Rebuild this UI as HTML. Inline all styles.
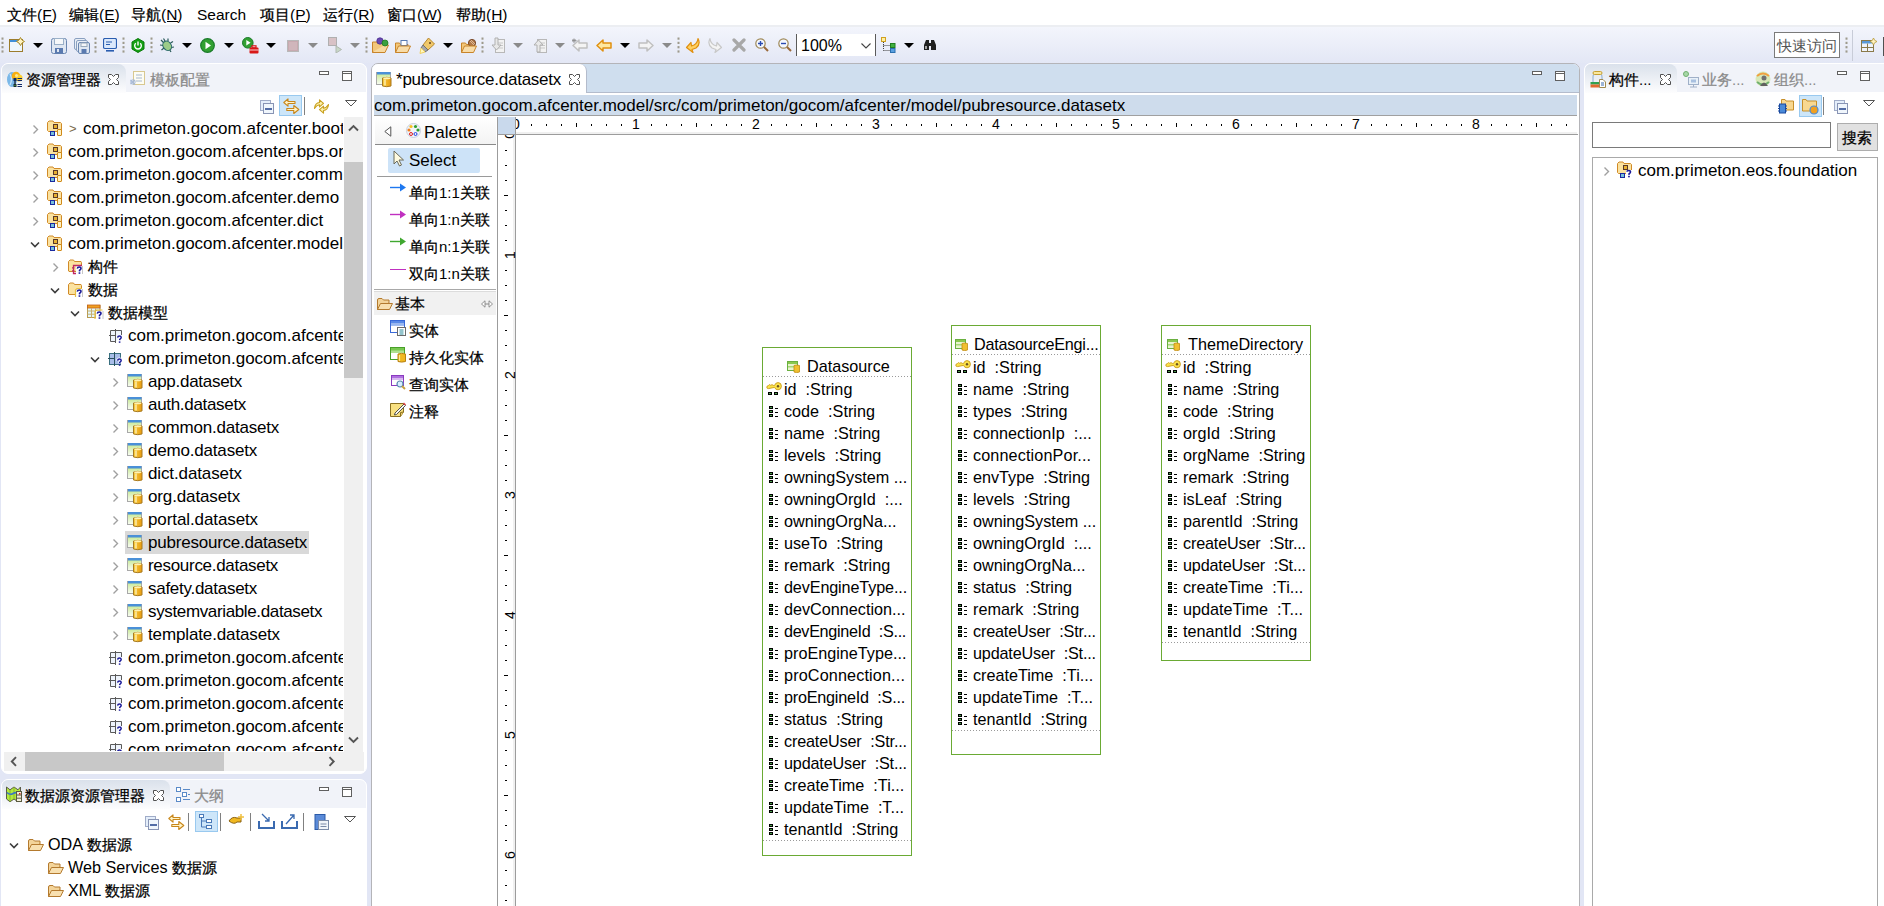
<!DOCTYPE html><html><head><meta charset="utf-8"><style>
html,body{margin:0;padding:0}
body{width:1884px;height:906px;overflow:hidden;position:relative;background:#e2e6f5;font-family:"Liberation Sans",sans-serif}
.t{position:absolute;white-space:nowrap}
.c{font-size:15px;line-height:0;-webkit-text-stroke:0.25px currentColor}
.ns .c{-webkit-text-stroke:0}
div,svg{position:absolute}
</style></head><body>
<div style="position:absolute;left:0px;top:0px;width:1884px;height:25px;background:#fff"></div>
<div style="position:absolute;left:0px;top:25px;width:1884px;height:2px;background:#eceef2"></div>
<div class="t " style="left:7px;top:5.00px;font-size:15.5px;line-height:19px;color:#000;"><span class="c">文件</span>(F)</div>
<div style="position:absolute;left:43px;top:21px;width:9px;height:1px;background:#000"></div>
<div class="t " style="left:69px;top:5.00px;font-size:15.5px;line-height:19px;color:#000;"><span class="c">编辑</span>(E)</div>
<div style="position:absolute;left:105px;top:21px;width:10px;height:1px;background:#000"></div>
<div class="t " style="left:131px;top:5.00px;font-size:15.5px;line-height:19px;color:#000;"><span class="c">导航</span>(N)</div>
<div style="position:absolute;left:167px;top:21px;width:11px;height:1px;background:#000"></div>
<div class="t " style="left:197px;top:5.00px;font-size:15.5px;line-height:19px;color:#000;">Search</div>
<div class="t " style="left:260px;top:5.00px;font-size:15.5px;line-height:19px;color:#000;"><span class="c">项目</span>(P)</div>
<div style="position:absolute;left:296px;top:21px;width:10px;height:1px;background:#000"></div>
<div class="t " style="left:323px;top:5.00px;font-size:15.5px;line-height:19px;color:#000;"><span class="c">运行</span>(R)</div>
<div style="position:absolute;left:359px;top:21px;width:11px;height:1px;background:#000"></div>
<div class="t " style="left:387px;top:5.00px;font-size:15.5px;line-height:19px;color:#000;"><span class="c">窗口</span>(W)</div>
<div style="position:absolute;left:423px;top:21px;width:15px;height:1px;background:#000"></div>
<div class="t " style="left:456px;top:5.00px;font-size:15.5px;line-height:19px;color:#000;"><span class="c">帮助</span>(H)</div>
<div style="position:absolute;left:492px;top:21px;width:11px;height:1px;background:#000"></div>
<div style="position:absolute;left:0px;top:27px;width:1884px;height:36px;background:linear-gradient(#f3f5fc,#e3e7f5)"></div>
<svg style="position:absolute;left:1px;top:37px;" width="3" height="17" viewBox="0 0 3 17"><rect x="0.5" y="0.5" width="2" height="2.2" fill="#9d9a8c"/><rect x="0.5" y="4.8" width="2" height="2.2" fill="#9d9a8c"/><rect x="0.5" y="9.1" width="2" height="2.2" fill="#9d9a8c"/><rect x="0.5" y="13.4" width="2" height="2.2" fill="#9d9a8c"/></svg>
<svg style="position:absolute;left:9px;top:37px;" width="16" height="16" viewBox="0 0 16 16"><rect x="0.5" y="2.5" width="13" height="12" fill="#eef6fc" stroke="#9c7c2c"/><rect x="1" y="3" width="12" height="2" fill="#3f8fd8"/><path d="M11.5 0.5 L13 3 L15.5 4.5 L13 6 L11.5 8.5 L10 6 L7.5 4.5 L10 3 Z" fill="#fff2c0" stroke="#a88a2a"/></svg>
<svg style="position:absolute;left:33px;top:43px;" width="10" height="5" viewBox="0 0 10 5"><path d="M0 0 L10 0 L5.0 5 Z" fill="#000"/></svg>
<svg style="position:absolute;left:51px;top:38px;" width="16" height="16" viewBox="0 0 16 16"><rect x="0.5" y="0.5" width="15" height="15" rx="2" fill="#dfe7f2" stroke="#6a86b0"/><rect x="3.5" y="0.5" width="9" height="6" fill="#f6f8fa" stroke="#9ab0c8"/><rect x="4" y="10" width="8" height="5.5" fill="#5a7ab0"/><rect x="6" y="11" width="2" height="3" fill="#dfe7f2"/></svg>
<svg style="position:absolute;left:74px;top:38px;" width="16" height="16" viewBox="0 0 16 16"><rect x="0.5" y="0.5" width="11" height="11" rx="1.5" fill="#e8eef6" stroke="#8aa0c0"/><rect x="2.5" y="2.5" width="11" height="11" rx="1.5" fill="#e8eef6" stroke="#8aa0c0"/><rect x="4.5" y="4.5" width="11" height="11" rx="1.5" fill="#dfe7f2" stroke="#6a86b0"/><rect x="7" y="5" width="6" height="3.5" fill="#f4f6f8" stroke="#9ab"/><rect x="7.5" y="11" width="5" height="4" fill="#5a7ab0"/></svg>
<svg style="position:absolute;left:94px;top:37px;" width="3" height="17" viewBox="0 0 3 17"><rect x="0.5" y="0.5" width="2" height="2.2" fill="#9d9a8c"/><rect x="0.5" y="4.8" width="2" height="2.2" fill="#9d9a8c"/><rect x="0.5" y="9.1" width="2" height="2.2" fill="#9d9a8c"/><rect x="0.5" y="13.4" width="2" height="2.2" fill="#9d9a8c"/></svg>
<svg style="position:absolute;left:103px;top:38px;" width="14" height="14" viewBox="0 0 14 14"><rect x="0.5" y="0.5" width="13" height="10" rx="1.5" fill="#dbe8fb" stroke="#2a5db0" stroke-width="1.2"/><path d="M3 4 L9 4 M3 6.5 L7 6.5" stroke="#2a5db0" stroke-width="1.2"/><rect x="3" y="12" width="8" height="1.6" fill="#2a5db0"/></svg>
<svg style="position:absolute;left:122px;top:37px;" width="3" height="17" viewBox="0 0 3 17"><rect x="0.5" y="0.5" width="2" height="2.2" fill="#9d9a8c"/><rect x="0.5" y="4.8" width="2" height="2.2" fill="#9d9a8c"/><rect x="0.5" y="9.1" width="2" height="2.2" fill="#9d9a8c"/><rect x="0.5" y="13.4" width="2" height="2.2" fill="#9d9a8c"/></svg>
<svg style="position:absolute;left:131px;top:38px;" width="14" height="15" viewBox="0 0 14 15"><path d="M7 0.5 L13 4 L13 11 L7 14.5 L1 11 L1 4 Z" fill="#14a014" stroke="#0a7a0a"/><path d="M4.8 5.3 A3.3 3.3 0 1 0 9.2 5.3" fill="none" stroke="#fff" stroke-width="1.4"/><path d="M7 3.5 L7 7.5" stroke="#fff" stroke-width="1.4"/></svg>
<svg style="position:absolute;left:150px;top:37px;" width="3" height="17" viewBox="0 0 3 17"><rect x="0.5" y="0.5" width="2" height="2.2" fill="#9d9a8c"/><rect x="0.5" y="4.8" width="2" height="2.2" fill="#9d9a8c"/><rect x="0.5" y="9.1" width="2" height="2.2" fill="#9d9a8c"/><rect x="0.5" y="13.4" width="2" height="2.2" fill="#9d9a8c"/></svg>
<svg style="position:absolute;left:159px;top:37px;" width="16" height="16" viewBox="0 0 16 16"><path d="M2 3 L5 6 M1 8 L4.5 8.5 M2.5 13 L5 11 M9 1.5 L9 4 M14 4.5 L11.5 6 M15 10 L12 10.5 M12 15 L10.5 12.5 M4.5 1.5 L6 4" stroke="#2a5a5a" stroke-width="1.2"/><ellipse cx="8.2" cy="8.8" rx="4" ry="5" transform="rotate(-35 8.2 8.8)" fill="#9ccc88" stroke="#2a6a6a" stroke-width="1.1"/></svg>
<svg style="position:absolute;left:182px;top:43px;" width="10" height="5" viewBox="0 0 10 5"><path d="M0 0 L10 0 L5.0 5 Z" fill="#000"/></svg>
<svg style="position:absolute;left:200px;top:38px;" width="15" height="15" viewBox="0 0 15 15"><circle cx="7.5" cy="7.5" r="6.8" fill="#32a032" stroke="#187a28" stroke-width="1.2"/><path d="M5.5 3.8 L11 7.5 L5.5 11.2 Z" fill="#fff"/></svg>
<svg style="position:absolute;left:224px;top:43px;" width="10" height="5" viewBox="0 0 10 5"><path d="M0 0 L10 0 L5.0 5 Z" fill="#000"/></svg>
<svg style="position:absolute;left:242px;top:37px;" width="17" height="17" viewBox="0 0 17 17"><circle cx="5.8" cy="5.8" r="5.3" fill="#32a032" stroke="#187a28"/><path d="M4.3 3 L8.6 5.8 L4.3 8.6 Z" fill="#fff"/><rect x="7.5" y="10.5" width="9" height="6" rx="1" fill="#d81818"/><rect x="10" y="8.8" width="4" height="2" fill="none" stroke="#d81818" stroke-width="1.2"/><path d="M7.5 13 L16.5 13" stroke="#fff" stroke-width="0.8"/></svg>
<svg style="position:absolute;left:266px;top:43px;" width="10" height="5" viewBox="0 0 10 5"><path d="M0 0 L10 0 L5.0 5 Z" fill="#000"/></svg>
<svg style="position:absolute;left:287px;top:40px;" width="12" height="12" viewBox="0 0 12 12"><rect x="0.5" y="0.5" width="11" height="11" fill="#c8aab0" stroke="#b8b8b8"/><rect x="2" y="2" width="8" height="8" fill="#d0b6bb"/></svg>
<svg style="position:absolute;left:308px;top:43px;" width="10" height="5" viewBox="0 0 10 5"><path d="M0 0 L10 0 L5.0 5 Z" fill="#8a8a8a"/></svg>
<svg style="position:absolute;left:328px;top:37px;" width="15" height="16" viewBox="0 0 15 16"><rect x="0.5" y="0.5" width="8" height="8" fill="#d8c2c6" stroke="#b0b0b0"/><path d="M8 9 L13.5 12.5 L8 16 Z" fill="#c8d8c8" stroke="#b0b8b0"/></svg>
<svg style="position:absolute;left:350px;top:43px;" width="10" height="5" viewBox="0 0 10 5"><path d="M0 0 L10 0 L5.0 5 Z" fill="#8a8a8a"/></svg>
<svg style="position:absolute;left:365px;top:37px;" width="3" height="17" viewBox="0 0 3 17"><rect x="0.5" y="0.5" width="2" height="2.2" fill="#9d9a8c"/><rect x="0.5" y="4.8" width="2" height="2.2" fill="#9d9a8c"/><rect x="0.5" y="9.1" width="2" height="2.2" fill="#9d9a8c"/><rect x="0.5" y="13.4" width="2" height="2.2" fill="#9d9a8c"/></svg>
<svg style="position:absolute;left:372px;top:37px;" width="17" height="16" viewBox="0 0 17 16"><path d="M0.5 5 L0.5 15.5 L13 15.5 L16.5 8 L4 8 L0.5 15.5" fill="#f8d9a0" stroke="#c8842a"/><path d="M0.5 15 L0.5 5 L5 5 L6 6.5 L13 6.5 L13 8" fill="#f3c77a" stroke="#c8842a"/><circle cx="8" cy="4" r="3.2" fill="#6a4ab0" stroke="#4a3090" stroke-width="0.8"/><circle cx="13" cy="6" r="3" fill="#3aa040" stroke="#207a20" stroke-width="0.8"/></svg>
<svg style="position:absolute;left:395px;top:38px;" width="16" height="15" viewBox="0 0 16 15"><path d="M0.5 14.5 L0.5 5 L4.5 5 L5.5 6.5 L13 6.5 L13 8" fill="#f3c77a" stroke="#c8842a"/><rect x="6" y="2.5" width="6" height="5" fill="#fff" stroke="#5a7ab0"/><path d="M0.5 14.5 L3.5 8 L15.5 8 L12.5 14.5 Z" fill="#f8dca8" stroke="#c8842a"/></svg>
<svg style="position:absolute;left:419px;top:37px;" width="17" height="17" viewBox="0 0 17 17"><path d="M9.5 1 L15.5 7 L9 13 L4 8 Z" fill="#f0c86a" stroke="#b8862a"/><path d="M4 8 L9 13 L6 15 L2 11 Z" fill="#a8a8a8" stroke="#707070"/><path d="M2 11 L6 15 L1 16.5 Z" fill="#fff8c0" stroke="#f0d060"/><circle cx="11" cy="6" r="1" fill="#604020"/></svg>
<svg style="position:absolute;left:443px;top:43px;" width="10" height="5" viewBox="0 0 10 5"><path d="M0 0 L10 0 L5.0 5 Z" fill="#000"/></svg>
<svg style="position:absolute;left:461px;top:38px;" width="16" height="15" viewBox="0 0 16 15"><path d="M0.5 14.5 L0.5 5 L4.5 5 L5.5 6.5 L13 6.5 L13 8" fill="#f3c77a" stroke="#c8842a"/><circle cx="11" cy="5" r="3.6" fill="#b27a4a" stroke="#7a4a2a"/><path d="M9 3 L13 7 M10 2 L14 6" stroke="#e8c8a8" stroke-width="0.8"/><path d="M0.5 14.5 L3.5 8 L15.5 8 L12.5 14.5 Z" fill="#f8dca8" stroke="#c8842a"/></svg>
<svg style="position:absolute;left:481px;top:37px;" width="3" height="17" viewBox="0 0 3 17"><rect x="0.5" y="0.5" width="2" height="2.2" fill="#9d9a8c"/><rect x="0.5" y="4.8" width="2" height="2.2" fill="#9d9a8c"/><rect x="0.5" y="9.1" width="2" height="2.2" fill="#9d9a8c"/><rect x="0.5" y="13.4" width="2" height="2.2" fill="#9d9a8c"/></svg>
<svg style="position:absolute;left:490px;top:37px;" width="15" height="16" viewBox="0 0 15 16"><rect x="5.5" y="2.5" width="9" height="13" fill="#f2f2f2" stroke="#b8b8b8"/><path d="M8 6 L13 6 M8 8.5 L13 8.5 M8 11 L13 11" stroke="#c8c8c8"/><path d="M5 1 L8 1 L8 8 L11 8 L6.5 13 L2 8 L5 8 Z" fill="#e8e8e8" stroke="#b0b0b0"/></svg>
<svg style="position:absolute;left:513px;top:43px;" width="10" height="5" viewBox="0 0 10 5"><path d="M0 0 L10 0 L5.0 5 Z" fill="#8a8a8a"/></svg>
<svg style="position:absolute;left:532px;top:37px;" width="15" height="16" viewBox="0 0 15 16"><rect x="5.5" y="2.5" width="9" height="13" fill="#f2f2f2" stroke="#b8b8b8"/><path d="M8 6 L13 6 M8 8.5 L13 8.5 M8 11 L13 11" stroke="#c8c8c8"/><path d="M5 15 L5 8 L2 8 L6.5 3 L11 8 L8 8 L8 15 Z" fill="#e8e8e8" stroke="#b0b0b0"/></svg>
<svg style="position:absolute;left:555px;top:43px;" width="10" height="5" viewBox="0 0 10 5"><path d="M0 0 L10 0 L5.0 5 Z" fill="#8a8a8a"/></svg>
<svg style="position:absolute;left:572px;top:38px;" width="16" height="15" viewBox="0 0 16 15"><path d="M1 7.5 L7 2 L7 5 L15 5 L15 10 L7 10 L7 13 Z" fill="#f4f4f4" stroke="#c0c0c0" stroke-width="1.5" stroke-linejoin="round"/><path d="M2 0.5 L2 5 M0 2.5 L4.5 2.5 M0.5 1 L3.5 4 M3.5 1 L0.5 4" stroke="#909090" stroke-width="0.9"/></svg>
<svg style="position:absolute;left:596px;top:38px;" width="16" height="15" viewBox="0 0 16 15"><path d="M1 7.5 L7 2 L7 5 L15 5 L15 10 L7 10 L7 13 Z" fill="#ffe8a0" stroke="#e09010" stroke-width="1.5" stroke-linejoin="round"/></svg>
<svg style="position:absolute;left:620px;top:43px;" width="10" height="5" viewBox="0 0 10 5"><path d="M0 0 L10 0 L5.0 5 Z" fill="#000"/></svg>
<svg style="position:absolute;left:638px;top:38px;" width="16" height="15" viewBox="0 0 16 15"><path d="M15 7.5 L9 2 L9 5 L1 5 L1 10 L9 10 L9 13 Z" fill="#f4f4f4" stroke="#c0c0c0" stroke-width="1.5" stroke-linejoin="round"/></svg>
<svg style="position:absolute;left:662px;top:43px;" width="10" height="5" viewBox="0 0 10 5"><path d="M0 0 L10 0 L5.0 5 Z" fill="#8a8a8a"/></svg>
<svg style="position:absolute;left:677px;top:37px;" width="3" height="17" viewBox="0 0 3 17"><rect x="0.5" y="0.5" width="2" height="2.2" fill="#9d9a8c"/><rect x="0.5" y="4.8" width="2" height="2.2" fill="#9d9a8c"/><rect x="0.5" y="9.1" width="2" height="2.2" fill="#9d9a8c"/><rect x="0.5" y="13.4" width="2" height="2.2" fill="#9d9a8c"/></svg>
<svg style="position:absolute;left:685px;top:37px;" width="16" height="16" viewBox="0 0 16 16"><g><path d="M13 1.5 Q16 7 11 11 L7 12.5 L8 15.5 L1.5 10.5 L6 5.5 L6.5 9 L9 8 Q12.5 6 13 1.5 Z" fill="#ffd060" stroke="#e09010" stroke-width="1.2" stroke-linejoin="round"/></g></svg>
<svg style="position:absolute;left:707px;top:37px;" width="16" height="16" viewBox="0 0 16 16"><g transform="translate(16,0) scale(-1,1)"><path d="M13 1.5 Q16 7 11 11 L7 12.5 L8 15.5 L1.5 10.5 L6 5.5 L6.5 9 L9 8 Q12.5 6 13 1.5 Z" fill="#f4f4f4" stroke="#c8c8c8" stroke-width="1.2" stroke-linejoin="round"/></g></svg>
<svg style="position:absolute;left:732px;top:38px;" width="14" height="14" viewBox="0 0 14 14"><path d="M2 2 L12 12 M12 2 L2 12" stroke="#a8a8a8" stroke-width="3.2" stroke-linecap="round"/></svg>
<svg style="position:absolute;left:755px;top:38px;" width="14" height="14" viewBox="0 0 14 14"><circle cx="5.5" cy="5.5" r="4.7" fill="#f4f8ff" stroke="#a08a5a" stroke-width="1.2"/><path d="M3 5.5 L8 5.5 M5.5 3 L5.5 8" stroke="#2a4ab0" stroke-width="1.4"/><path d="M9 9 L13 13" stroke="#9a6a3a" stroke-width="2"/></svg>
<svg style="position:absolute;left:778px;top:38px;" width="14" height="14" viewBox="0 0 14 14"><circle cx="5.5" cy="5.5" r="4.7" fill="#f4f8ff" stroke="#a08a5a" stroke-width="1.2"/><path d="M3 5.5 L8 5.5" stroke="#2a4ab0" stroke-width="1.4"/><path d="M9 9 L13 13" stroke="#9a6a3a" stroke-width="2"/></svg>
<div style="position:absolute;left:796px;top:34px;width:1px;height:22px;background:#5a5a5a"></div>
<div style="position:absolute;left:797px;top:34px;width:78px;height:22px;background:#fff"></div>
<div style="position:absolute;left:875px;top:34px;width:1px;height:22px;background:#5a5a5a"></div>
<div class="t " style="left:801px;top:36.00px;font-size:16px;line-height:19px;color:#000;">100%</div>
<svg style="position:absolute;left:861px;top:43px;" width="10" height="6" viewBox="0 0 10 6"><path d="M0.5 0.5 L5 5 L9.5 0.5" fill="none" stroke="#444" stroke-width="1.1"/></svg>
<svg style="position:absolute;left:881px;top:37px;" width="15" height="16" viewBox="0 0 15 16"><rect x="0.5" y="0.5" width="4" height="4" fill="#fff0a0" stroke="#d0a020"/><rect x="9.5" y="6.5" width="4.5" height="4" fill="#40b040" stroke="#208020"/><rect x="9.5" y="11.5" width="4.5" height="4" fill="#5aa0e0" stroke="#2a70b0"/><path d="M2.5 5 L2.5 13.5 M2.5 8.5 L9 8.5 M2.5 13.5 L9 13.5" stroke="#404040" stroke-dasharray="1 1"/></svg>
<svg style="position:absolute;left:904px;top:43px;" width="10" height="5" viewBox="0 0 10 5"><path d="M0 0 L10 0 L5.0 5 Z" fill="#000"/></svg>
<svg style="position:absolute;left:923px;top:38px;" width="14" height="13" viewBox="0 0 14 13"><path d="M1 12 L1 7 L3 2 L6 2 L6 12 Z M13 12 L13 7 L11 2 L8 2 L8 12 Z" fill="#202020"/><rect x="5.5" y="5" width="3" height="3" fill="#202020"/><rect x="2" y="8" width="2" height="3" fill="#fff" opacity="0.6"/></svg>
<div style="position:absolute;left:1774px;top:32px;width:66px;height:26px;background:#fff;border:1px solid #7a7a7a;box-sizing:border-box"></div>
<div class="t ns" style="left:1777px;top:37.00px;font-size:15px;line-height:18px;color:#555;"><span class="c">快速访问</span></div>
<svg style="position:absolute;left:1845px;top:37px;" width="3" height="17" viewBox="0 0 3 17"><rect x="0.5" y="0.5" width="2" height="2.2" fill="#9d9a8c"/><rect x="0.5" y="4.8" width="2" height="2.2" fill="#9d9a8c"/><rect x="0.5" y="9.1" width="2" height="2.2" fill="#9d9a8c"/><rect x="0.5" y="13.4" width="2" height="2.2" fill="#9d9a8c"/></svg>
<div style="position:absolute;left:1852px;top:30px;width:1px;height:31px;background:#c8ccd8"></div>
<svg style="position:absolute;left:1861px;top:38px;" width="16" height="15" viewBox="0 0 16 15"><rect x="0.5" y="2.5" width="12" height="11" fill="#f0f4fa" stroke="#8a7a4a"/><rect x="1" y="3" width="11" height="2.5" fill="#5a9ad8"/><path d="M6.5 5.5 L6.5 13.5 M0.5 9.5 L12.5 9.5" stroke="#8a7a4a"/><path d="M12.5 0 L13.7 2.3 L16 3.5 L13.7 4.7 L12.5 7 L11.3 4.7 L9 3.5 L11.3 2.3 Z" fill="#fff2c0" stroke="#b89a3a" stroke-width="0.8"/></svg>
<div style="position:absolute;left:1883px;top:37px;width:1px;height:19px;background:#505050"></div>
<div style="position:absolute;left:1px;top:63px;width:366px;height:711px;background:#fff;border:1px solid #fff;border-radius:7px 7px 7px 7px;box-sizing:border-box"></div>
<div style="position:absolute;left:2px;top:64px;width:364px;height:28px;background:#f1f3f9;border-radius:6px 6px 0 0"></div>
<div style="position:absolute;left:2px;top:64px;width:124px;height:29px;background:linear-gradient(#dae1eb,#fdfdfe);border-radius:6px 8px 0 0"></div>
<div class="t " style="left:26px;top:71.00px;font-size:15px;line-height:18px;color:#000;"><span class="c">资源管理器</span></div>
<svg style="position:absolute;left:108px;top:74px;" width="11" height="11" viewBox="0 0 11 11"><path d="M0.5 0.5 L3.5 0.5 L5.5 2.5 L7.5 0.5 L10.5 0.5 L10.5 3.5 L8.5 5.5 L10.5 7.5 L10.5 10.5 L7.5 10.5 L5.5 8.5 L3.5 10.5 L0.5 10.5 L0.5 7.5 L2.5 5.5 L0.5 3.5 Z" fill="#fff" stroke="#505050" stroke-width="1"/></svg>
<div class="t " style="left:150px;top:71.00px;font-size:15px;line-height:18px;color:#8a8a8a;"><span class="c">模板配置</span></div>
<svg style="position:absolute;left:319px;top:71px;" width="10" height="4" viewBox="0 0 10 4"><rect x="0.5" y="0.5" width="9" height="3" fill="#fff" stroke="#606060"/></svg>
<svg style="position:absolute;left:342px;top:71px;" width="10" height="10" viewBox="0 0 10 10"><rect x="0.5" y="0.5" width="9" height="9" fill="#fff" stroke="#606060"/><path d="M0.5 2.5 L9.5 2.5" stroke="#606060"/></svg>
<svg style="position:absolute;left:6px;top:71px;" width="17" height="17" viewBox="0 0 17 17"><ellipse cx="6" cy="8.5" rx="5" ry="7.5" fill="#7ab8e8"/><path d="M4 3 Q7 8 4 14" stroke="#c8e4f8" stroke-width="1.3" fill="none"/><circle cx="10" cy="5" r="4.3" fill="#f8b010"/><circle cx="13" cy="7" r="3.6" fill="#fcd030"/><circle cx="10.5" cy="4.5" r="1.5" fill="#fde89a"/><rect x="7.5" y="7" width="3" height="3" fill="#0a2a6a"/><rect x="7.5" y="13" width="3" height="3" fill="#1a2a2a"/><rect x="8.5" y="14" width="1" height="1" fill="#4ac04a"/><path d="M9 10 L9 13" stroke="#101828" stroke-width="1.2"/><path d="M11.5 7.5 L16 7.5 M11.5 9.5 L16 9.5 M11.5 13.5 L16 13.5 M11.5 15.5 L16 15.5" stroke="#102a6a" stroke-width="1.1"/></svg>
<svg style="position:absolute;left:130px;top:71px;" width="16" height="16" viewBox="0 0 16 16"><rect x="3.5" y="0.5" width="11" height="13" fill="#fdfdf4" stroke="#d8c890"/><path d="M6 4 L12 4 M6 7 L12 7 M6 10 L12 10" stroke="#a8b8d0"/><path d="M0.5 9 L5 13.5 M0.5 13 L5 9" stroke="#a8bad8" stroke-width="1.2"/><circle cx="3" cy="11" r="2.2" fill="none" stroke="#a8bad8"/></svg>
<svg style="position:absolute;left:260px;top:100px;" width="14" height="14" viewBox="0 0 14 14"><rect x="0.5" y="0.5" width="10" height="10" fill="#e4eefa" stroke="#a0acc8"/><rect x="3.5" y="3.5" width="10" height="10" fill="#f0f6fc" stroke="#8894b4"/><path d="M5 9 L12 9" stroke="#1f3f8a" stroke-width="1.5"/></svg>
<div style="position:absolute;left:279px;top:95px;width:23px;height:21px;background:#cde6f9;border:1px solid #99c9ef;box-sizing:border-box"></div>
<svg style="position:absolute;left:283px;top:98px;" width="17" height="17" viewBox="0 0 17 17"><path d="M0.8 4.5 L5 0.8 L5 3.5 L12 3.5 L12 5.5 L5 5.5 L5 8.2 Z" fill="#fff4c8" stroke="#c8861a" stroke-width="1.1" stroke-linejoin="round"/><path d="M15.8 11.5 L10.8 7.5 L10.8 10.5 L3.8 10.5 L3.8 12.5 L10.8 12.5 L10.8 15.5 Z" fill="#fff4c8" stroke="#c8861a" stroke-width="1.1" stroke-linejoin="round"/></svg>
<div style="position:absolute;left:304px;top:97px;width:1px;height:18px;background:#808080"></div>
<svg style="position:absolute;left:314px;top:99px;" width="15" height="15" viewBox="0 0 15 15"><path d="M0.5 9.5 Q1 4 5.5 3.5 L5.5 0.8 L9.5 4.3 L5.5 7.8 L5.5 5.8 Q2.5 6.2 0.5 9.5 Z" fill="#fdf0a8" stroke="#c8a020" stroke-width="1.1" stroke-linejoin="round"/><path d="M14.5 5.5 Q14 11 9.5 11.5 L9.5 14.2 L5.5 10.7 L9.5 7.2 L9.5 9.2 Q12.5 8.8 14.5 5.5 Z" fill="#fdf0a8" stroke="#c8a020" stroke-width="1.1" stroke-linejoin="round"/></svg>
<svg style="position:absolute;left:345px;top:100px;" width="12" height="7" viewBox="0 0 12 7"><path d="M0.5 0.5 L11.5 0.5 L6 6 Z" fill="#fff" stroke="#555" stroke-width="1"/></svg>
<div style="left:2px;top:117px;width:341px;height:634px;overflow:hidden">
<svg style="position:absolute;left:30px;top:7px;" width="7" height="11" viewBox="0 0 7 11"><path d="M1.5 1.5 L5.5 5.5 L1.5 9.5" fill="none" stroke="#a0a0a0" stroke-width="1.4"/></svg>
<svg style="position:absolute;left:45px;top:3px;" width="17" height="17" viewBox="0 0 17 17">
<path d="M0.5 2.5 L2 1 L6 1 L7 2.5 L13.5 2.5 L14.5 3.5 L14.5 11.5 L1.5 11.5 L0.5 10.5 Z" fill="#fbe2a0" stroke="#d08a28"/>
<rect x="6.5" y="4.5" width="4" height="4" fill="#e8b030" stroke="#5a3828"/>
<rect x="3.5" y="11.5" width="4" height="4" fill="#78c0d8" stroke="#1a2aa0"/>
<rect x="10.5" y="9.5" width="4" height="6" rx="0.5" fill="#fff0c0" stroke="#d08a18"/></svg>
<div class="t " style="left:67px;top:4.00px;font-size:13px;line-height:16px;color:#7a6a4a;">&gt;</div>
<div class="t " style="left:81px;top:2.00px;font-size:17px;line-height:20px;color:#000;">com.primeton.gocom.afcenter.boot</div>
<svg style="position:absolute;left:30px;top:30px;" width="7" height="11" viewBox="0 0 7 11"><path d="M1.5 1.5 L5.5 5.5 L1.5 9.5" fill="none" stroke="#a0a0a0" stroke-width="1.4"/></svg>
<svg style="position:absolute;left:45px;top:26px;" width="17" height="17" viewBox="0 0 17 17">
<path d="M0.5 2.5 L2 1 L6 1 L7 2.5 L13.5 2.5 L14.5 3.5 L14.5 11.5 L1.5 11.5 L0.5 10.5 Z" fill="#fbe2a0" stroke="#d08a28"/>
<rect x="6.5" y="4.5" width="4" height="4" fill="#e8b030" stroke="#5a3828"/>
<rect x="3.5" y="11.5" width="4" height="4" fill="#78c0d8" stroke="#1a2aa0"/>
<rect x="10.5" y="9.5" width="4" height="6" rx="0.5" fill="#fff0c0" stroke="#d08a18"/></svg>
<div class="t " style="left:66px;top:25.00px;font-size:17px;line-height:20px;color:#000;">com.primeton.gocom.afcenter.bps.org</div>
<svg style="position:absolute;left:30px;top:53px;" width="7" height="11" viewBox="0 0 7 11"><path d="M1.5 1.5 L5.5 5.5 L1.5 9.5" fill="none" stroke="#a0a0a0" stroke-width="1.4"/></svg>
<svg style="position:absolute;left:45px;top:49px;" width="17" height="17" viewBox="0 0 17 17">
<path d="M0.5 2.5 L2 1 L6 1 L7 2.5 L13.5 2.5 L14.5 3.5 L14.5 11.5 L1.5 11.5 L0.5 10.5 Z" fill="#fbe2a0" stroke="#d08a28"/>
<rect x="6.5" y="4.5" width="4" height="4" fill="#e8b030" stroke="#5a3828"/>
<rect x="3.5" y="11.5" width="4" height="4" fill="#78c0d8" stroke="#1a2aa0"/>
<rect x="10.5" y="9.5" width="4" height="6" rx="0.5" fill="#fff0c0" stroke="#d08a18"/></svg>
<div class="t " style="left:66px;top:48.00px;font-size:17px;line-height:20px;color:#000;">com.primeton.gocom.afcenter.common</div>
<svg style="position:absolute;left:30px;top:76px;" width="7" height="11" viewBox="0 0 7 11"><path d="M1.5 1.5 L5.5 5.5 L1.5 9.5" fill="none" stroke="#a0a0a0" stroke-width="1.4"/></svg>
<svg style="position:absolute;left:45px;top:72px;" width="17" height="17" viewBox="0 0 17 17">
<path d="M0.5 2.5 L2 1 L6 1 L7 2.5 L13.5 2.5 L14.5 3.5 L14.5 11.5 L1.5 11.5 L0.5 10.5 Z" fill="#fbe2a0" stroke="#d08a28"/>
<rect x="6.5" y="4.5" width="4" height="4" fill="#e8b030" stroke="#5a3828"/>
<rect x="3.5" y="11.5" width="4" height="4" fill="#78c0d8" stroke="#1a2aa0"/>
<rect x="10.5" y="9.5" width="4" height="6" rx="0.5" fill="#fff0c0" stroke="#d08a18"/></svg>
<div class="t " style="left:66px;top:71.00px;font-size:17px;line-height:20px;color:#000;">com.primeton.gocom.afcenter.demo</div>
<svg style="position:absolute;left:30px;top:99px;" width="7" height="11" viewBox="0 0 7 11"><path d="M1.5 1.5 L5.5 5.5 L1.5 9.5" fill="none" stroke="#a0a0a0" stroke-width="1.4"/></svg>
<svg style="position:absolute;left:45px;top:95px;" width="17" height="17" viewBox="0 0 17 17">
<path d="M0.5 2.5 L2 1 L6 1 L7 2.5 L13.5 2.5 L14.5 3.5 L14.5 11.5 L1.5 11.5 L0.5 10.5 Z" fill="#fbe2a0" stroke="#d08a28"/>
<rect x="6.5" y="4.5" width="4" height="4" fill="#e8b030" stroke="#5a3828"/>
<rect x="3.5" y="11.5" width="4" height="4" fill="#78c0d8" stroke="#1a2aa0"/>
<rect x="10.5" y="9.5" width="4" height="6" rx="0.5" fill="#fff0c0" stroke="#d08a18"/></svg>
<div class="t " style="left:66px;top:94.00px;font-size:17px;line-height:20px;color:#000;">com.primeton.gocom.afcenter.dict</div>
<svg style="position:absolute;left:28px;top:124px;" width="11" height="7" viewBox="0 0 11 7"><path d="M1 1.5 L5 5.5 L9 1.5" fill="none" stroke="#3c3c3c" stroke-width="1.6"/></svg>
<svg style="position:absolute;left:45px;top:118px;" width="17" height="17" viewBox="0 0 17 17">
<path d="M0.5 2.5 L2 1 L6 1 L7 2.5 L13.5 2.5 L14.5 3.5 L14.5 11.5 L1.5 11.5 L0.5 10.5 Z" fill="#fbe2a0" stroke="#d08a28"/>
<rect x="6.5" y="4.5" width="4" height="4" fill="#e8b030" stroke="#5a3828"/>
<rect x="3.5" y="11.5" width="4" height="4" fill="#78c0d8" stroke="#1a2aa0"/>
<rect x="10.5" y="9.5" width="4" height="6" rx="0.5" fill="#fff0c0" stroke="#d08a18"/></svg>
<div class="t " style="left:66px;top:117.00px;font-size:17px;line-height:20px;color:#000;">com.primeton.gocom.afcenter.model</div>
<svg style="position:absolute;left:50px;top:145px;" width="7" height="11" viewBox="0 0 7 11"><path d="M1.5 1.5 L5.5 5.5 L1.5 9.5" fill="none" stroke="#a0a0a0" stroke-width="1.4"/></svg>
<svg style="position:absolute;left:65px;top:141px;" width="17" height="17" viewBox="0 0 17 17"><path d="M1.5 3.5 L3 2 L6.5 2 L7.5 3.5 L14 3.5 L14.5 4.5 L14.5 13.5 L2 13.5 L1.5 13 Z" fill="#fbe2a0" stroke="#d08a28"/><rect x="9" y="8" width="6" height="8" fill="#fff"/><path d="M15.5 8 L15.5 16" stroke="#c8c8c8"/><path d="M15 7.5 L6.5 7.5 L6.5 15.5 L9 15.5 M5 9.8 L7.5 9.8 M5 12.8 L7.5 12.8" stroke="#c02860" stroke-width="1.3" fill="none"/><path d="M10.3 10.6 Q10.5 9 12.2 9 Q14 9 14 10.6 Q14 11.6 12.6 12.3 L12.4 13.3" fill="none" stroke="#1a1a9a" stroke-width="1.6"/><rect x="11.6" y="14.3" width="1.7" height="1.5" fill="#1a1a9a"/></svg>
<div class="t " style="left:86px;top:141.00px;font-size:15px;line-height:18px;color:#000;"><span class="c">构件</span></div>
<svg style="position:absolute;left:48px;top:170px;" width="11" height="7" viewBox="0 0 11 7"><path d="M1 1.5 L5 5.5 L9 1.5" fill="none" stroke="#3c3c3c" stroke-width="1.6"/></svg>
<svg style="position:absolute;left:65px;top:164px;" width="17" height="17" viewBox="0 0 17 17"><path d="M1.5 3.5 L3 2 L6.5 2 L7.5 3.5 L14 3.5 L14.5 4.5 L14.5 13.5 L2 13.5 L1.5 13 Z" fill="#fbe2a0" stroke="#d08a28"/><rect x="9" y="8" width="6" height="8" fill="#fff"/><path d="M15.5 8 L15.5 16" stroke="#c8c8c8"/><path d="M8.5 16 L8.5 9 L10 7.5 L15 7.5" fill="none" stroke="#e8c040" stroke-width="1.2"/><path d="M10.3 10.6 Q10.5 9 12.2 9 Q14 9 14 10.6 Q14 11.6 12.6 12.3 L12.4 13.3" fill="none" stroke="#1a1a9a" stroke-width="1.6"/><rect x="11.6" y="14.3" width="1.7" height="1.5" fill="#1a1a9a"/></svg>
<div class="t " style="left:86px;top:164.00px;font-size:15px;line-height:18px;color:#000;"><span class="c">数据</span></div>
<svg style="position:absolute;left:68px;top:193px;" width="11" height="7" viewBox="0 0 11 7"><path d="M1 1.5 L5 5.5 L9 1.5" fill="none" stroke="#3c3c3c" stroke-width="1.6"/></svg>
<svg style="position:absolute;left:85px;top:186px;" width="17" height="17" viewBox="0 0 17 17"><rect x="0.5" y="2.5" width="12.5" height="12" fill="#e4f8fc" stroke="#b89a50"/><rect x="0.5" y="2" width="12.5" height="3" fill="#f0a020" stroke="#c0601a" stroke-width="0.8"/><path d="M0.5 8 L13 8 M0.5 11.2 L13 11.2 M4.5 5 L4.5 14.5 M8.5 5 L8.5 14.5" stroke="#c8b070" stroke-width="1"/><path d="M8 16 L8 8.5 L9.5 7 L15.5 7" fill="none" stroke="#e8c040" stroke-width="1.2"/><rect x="9" y="8" width="6.5" height="8.5" fill="#fff"/><path d="M16 8 L16 16" stroke="#c8c8c8"/><path d="M10.3 10.6 Q10.5 9 12.2 9 Q14 9 14 10.6 Q14 11.6 12.6 12.3 L12.4 13.3" fill="none" stroke="#1a1a9a" stroke-width="1.6"/><rect x="11.6" y="14.3" width="1.7" height="1.5" fill="#1a1a9a"/></svg>
<div class="t " style="left:106px;top:187.00px;font-size:15px;line-height:18px;color:#000;"><span class="c">数据模型</span></div>
<svg style="position:absolute;left:105px;top:210px;" width="17" height="17" viewBox="0 0 17 17"><path d="M9 14.5 L3.5 14.5 L3.5 3.5 L14.5 3.5 L14.5 8" fill="#eef4fc" stroke="#5a5a5a"/><path d="M8.5 2 L8.5 16 M2 8.5 L9 8.5" stroke="#5a5a5a"/><path d="M10.6 10.6 Q10.8 9 12.4 9 Q14.2 9 14.2 10.6 Q14.2 11.6 12.8 12.3 L12.6 13.2" fill="none" stroke="#fff" stroke-width="3"/><path d="M10.6 10.6 Q10.8 9 12.4 9 Q14.2 9 14.2 10.6 Q14.2 11.6 12.8 12.3 L12.6 13.2" fill="none" stroke="#1a1a9a" stroke-width="1.5"/><rect x="11.8" y="14.4" width="1.6" height="1.4" fill="#1a1a9a"/></svg>
<div class="t " style="left:126px;top:209.00px;font-size:17px;line-height:20px;color:#000;">com.primeton.gocom.afcenter.model</div>
<svg style="position:absolute;left:88px;top:239px;" width="11" height="7" viewBox="0 0 11 7"><path d="M1 1.5 L5 5.5 L9 1.5" fill="none" stroke="#3c3c3c" stroke-width="1.6"/></svg>
<svg style="position:absolute;left:105px;top:233px;" width="17" height="17" viewBox="0 0 17 17"><rect x="2.5" y="3.5" width="11" height="11" fill="#a8bde8" stroke="#3a7080"/><path d="M7.5 2 L7.5 16 M1 8.5 L8 8.5" stroke="#2a5060"/><path d="M10.6 10.6 Q10.8 9 12.4 9 Q14.2 9 14.2 10.6 Q14.2 11.6 12.8 12.3 L12.6 13.2" fill="none" stroke="#fff" stroke-width="3"/><path d="M10.6 10.6 Q10.8 9 12.4 9 Q14.2 9 14.2 10.6 Q14.2 11.6 12.8 12.3 L12.6 13.2" fill="none" stroke="#1a1a9a" stroke-width="1.5"/><rect x="11.8" y="14.4" width="1.6" height="1.4" fill="#1a1a9a"/></svg>
<div class="t " style="left:126px;top:232.00px;font-size:17px;line-height:20px;color:#000;">com.primeton.gocom.afcenter.model</div>
<svg style="position:absolute;left:110px;top:260px;" width="7" height="11" viewBox="0 0 7 11"><path d="M1.5 1.5 L5.5 5.5 L1.5 9.5" fill="none" stroke="#a0a0a0" stroke-width="1.4"/></svg>
<svg style="position:absolute;left:125px;top:256px;" width="17" height="17" viewBox="0 0 17 17"><defs><linearGradient id="dsg" x1="0" y1="0" x2="0" y2="1"><stop offset="0" stop-color="#c4e88a"/><stop offset="0.7" stop-color="#eaf6d8"/><stop offset="1" stop-color="#f8fcf0"/></linearGradient><linearGradient id="cyl" x1="0" y1="0" x2="1" y2="0"><stop offset="0" stop-color="#f8d040"/><stop offset="1" stop-color="#e89a10"/></linearGradient></defs>
<rect x="0.5" y="1.5" width="14" height="12" fill="url(#dsg)" stroke="#a8a8a8"/>
<rect x="1" y="1" width="13.5" height="2.5" fill="#4a90d8"/>
<path d="M6.5 7 Q10.8 5.6 15 7 L15 15 Q10.8 16.4 6.5 15 Z" fill="url(#cyl)" stroke="#a87a20" stroke-width="1"/>
<ellipse cx="10.8" cy="7.3" rx="3.6" ry="1" fill="#fff2b0"/>
<path d="M9 8.5 L9 14.5" stroke="#fff6c8" stroke-width="1.2"/></svg>
<div class="t " style="left:146px;top:255.00px;font-size:17px;line-height:20px;color:#000;letter-spacing:-0.28px">app.datasetx</div>
<svg style="position:absolute;left:110px;top:283px;" width="7" height="11" viewBox="0 0 7 11"><path d="M1.5 1.5 L5.5 5.5 L1.5 9.5" fill="none" stroke="#a0a0a0" stroke-width="1.4"/></svg>
<svg style="position:absolute;left:125px;top:279px;" width="17" height="17" viewBox="0 0 17 17"><defs><linearGradient id="dsg" x1="0" y1="0" x2="0" y2="1"><stop offset="0" stop-color="#c4e88a"/><stop offset="0.7" stop-color="#eaf6d8"/><stop offset="1" stop-color="#f8fcf0"/></linearGradient><linearGradient id="cyl" x1="0" y1="0" x2="1" y2="0"><stop offset="0" stop-color="#f8d040"/><stop offset="1" stop-color="#e89a10"/></linearGradient></defs>
<rect x="0.5" y="1.5" width="14" height="12" fill="url(#dsg)" stroke="#a8a8a8"/>
<rect x="1" y="1" width="13.5" height="2.5" fill="#4a90d8"/>
<path d="M6.5 7 Q10.8 5.6 15 7 L15 15 Q10.8 16.4 6.5 15 Z" fill="url(#cyl)" stroke="#a87a20" stroke-width="1"/>
<ellipse cx="10.8" cy="7.3" rx="3.6" ry="1" fill="#fff2b0"/>
<path d="M9 8.5 L9 14.5" stroke="#fff6c8" stroke-width="1.2"/></svg>
<div class="t " style="left:146px;top:278.00px;font-size:17px;line-height:20px;color:#000;letter-spacing:-0.31px">auth.datasetx</div>
<svg style="position:absolute;left:110px;top:306px;" width="7" height="11" viewBox="0 0 7 11"><path d="M1.5 1.5 L5.5 5.5 L1.5 9.5" fill="none" stroke="#a0a0a0" stroke-width="1.4"/></svg>
<svg style="position:absolute;left:125px;top:302px;" width="17" height="17" viewBox="0 0 17 17"><defs><linearGradient id="dsg" x1="0" y1="0" x2="0" y2="1"><stop offset="0" stop-color="#c4e88a"/><stop offset="0.7" stop-color="#eaf6d8"/><stop offset="1" stop-color="#f8fcf0"/></linearGradient><linearGradient id="cyl" x1="0" y1="0" x2="1" y2="0"><stop offset="0" stop-color="#f8d040"/><stop offset="1" stop-color="#e89a10"/></linearGradient></defs>
<rect x="0.5" y="1.5" width="14" height="12" fill="url(#dsg)" stroke="#a8a8a8"/>
<rect x="1" y="1" width="13.5" height="2.5" fill="#4a90d8"/>
<path d="M6.5 7 Q10.8 5.6 15 7 L15 15 Q10.8 16.4 6.5 15 Z" fill="url(#cyl)" stroke="#a87a20" stroke-width="1"/>
<ellipse cx="10.8" cy="7.3" rx="3.6" ry="1" fill="#fff2b0"/>
<path d="M9 8.5 L9 14.5" stroke="#fff6c8" stroke-width="1.2"/></svg>
<div class="t " style="left:146px;top:301.00px;font-size:17px;line-height:20px;color:#000;letter-spacing:-0.21px">common.datasetx</div>
<svg style="position:absolute;left:110px;top:329px;" width="7" height="11" viewBox="0 0 7 11"><path d="M1.5 1.5 L5.5 5.5 L1.5 9.5" fill="none" stroke="#a0a0a0" stroke-width="1.4"/></svg>
<svg style="position:absolute;left:125px;top:325px;" width="17" height="17" viewBox="0 0 17 17"><defs><linearGradient id="dsg" x1="0" y1="0" x2="0" y2="1"><stop offset="0" stop-color="#c4e88a"/><stop offset="0.7" stop-color="#eaf6d8"/><stop offset="1" stop-color="#f8fcf0"/></linearGradient><linearGradient id="cyl" x1="0" y1="0" x2="1" y2="0"><stop offset="0" stop-color="#f8d040"/><stop offset="1" stop-color="#e89a10"/></linearGradient></defs>
<rect x="0.5" y="1.5" width="14" height="12" fill="url(#dsg)" stroke="#a8a8a8"/>
<rect x="1" y="1" width="13.5" height="2.5" fill="#4a90d8"/>
<path d="M6.5 7 Q10.8 5.6 15 7 L15 15 Q10.8 16.4 6.5 15 Z" fill="url(#cyl)" stroke="#a87a20" stroke-width="1"/>
<ellipse cx="10.8" cy="7.3" rx="3.6" ry="1" fill="#fff2b0"/>
<path d="M9 8.5 L9 14.5" stroke="#fff6c8" stroke-width="1.2"/></svg>
<div class="t " style="left:146px;top:324.00px;font-size:17px;line-height:20px;color:#000;letter-spacing:-0.19px">demo.datasetx</div>
<svg style="position:absolute;left:110px;top:352px;" width="7" height="11" viewBox="0 0 7 11"><path d="M1.5 1.5 L5.5 5.5 L1.5 9.5" fill="none" stroke="#a0a0a0" stroke-width="1.4"/></svg>
<svg style="position:absolute;left:125px;top:348px;" width="17" height="17" viewBox="0 0 17 17"><defs><linearGradient id="dsg" x1="0" y1="0" x2="0" y2="1"><stop offset="0" stop-color="#c4e88a"/><stop offset="0.7" stop-color="#eaf6d8"/><stop offset="1" stop-color="#f8fcf0"/></linearGradient><linearGradient id="cyl" x1="0" y1="0" x2="1" y2="0"><stop offset="0" stop-color="#f8d040"/><stop offset="1" stop-color="#e89a10"/></linearGradient></defs>
<rect x="0.5" y="1.5" width="14" height="12" fill="url(#dsg)" stroke="#a8a8a8"/>
<rect x="1" y="1" width="13.5" height="2.5" fill="#4a90d8"/>
<path d="M6.5 7 Q10.8 5.6 15 7 L15 15 Q10.8 16.4 6.5 15 Z" fill="url(#cyl)" stroke="#a87a20" stroke-width="1"/>
<ellipse cx="10.8" cy="7.3" rx="3.6" ry="1" fill="#fff2b0"/>
<path d="M9 8.5 L9 14.5" stroke="#fff6c8" stroke-width="1.2"/></svg>
<div class="t " style="left:146px;top:347.00px;font-size:17px;line-height:20px;color:#000;letter-spacing:-0.12px">dict.datasetx</div>
<svg style="position:absolute;left:110px;top:375px;" width="7" height="11" viewBox="0 0 7 11"><path d="M1.5 1.5 L5.5 5.5 L1.5 9.5" fill="none" stroke="#a0a0a0" stroke-width="1.4"/></svg>
<svg style="position:absolute;left:125px;top:371px;" width="17" height="17" viewBox="0 0 17 17"><defs><linearGradient id="dsg" x1="0" y1="0" x2="0" y2="1"><stop offset="0" stop-color="#c4e88a"/><stop offset="0.7" stop-color="#eaf6d8"/><stop offset="1" stop-color="#f8fcf0"/></linearGradient><linearGradient id="cyl" x1="0" y1="0" x2="1" y2="0"><stop offset="0" stop-color="#f8d040"/><stop offset="1" stop-color="#e89a10"/></linearGradient></defs>
<rect x="0.5" y="1.5" width="14" height="12" fill="url(#dsg)" stroke="#a8a8a8"/>
<rect x="1" y="1" width="13.5" height="2.5" fill="#4a90d8"/>
<path d="M6.5 7 Q10.8 5.6 15 7 L15 15 Q10.8 16.4 6.5 15 Z" fill="url(#cyl)" stroke="#a87a20" stroke-width="1"/>
<ellipse cx="10.8" cy="7.3" rx="3.6" ry="1" fill="#fff2b0"/>
<path d="M9 8.5 L9 14.5" stroke="#fff6c8" stroke-width="1.2"/></svg>
<div class="t " style="left:146px;top:370.00px;font-size:17px;line-height:20px;color:#000;letter-spacing:-0.13px">org.datasetx</div>
<svg style="position:absolute;left:110px;top:398px;" width="7" height="11" viewBox="0 0 7 11"><path d="M1.5 1.5 L5.5 5.5 L1.5 9.5" fill="none" stroke="#a0a0a0" stroke-width="1.4"/></svg>
<svg style="position:absolute;left:125px;top:394px;" width="17" height="17" viewBox="0 0 17 17"><defs><linearGradient id="dsg" x1="0" y1="0" x2="0" y2="1"><stop offset="0" stop-color="#c4e88a"/><stop offset="0.7" stop-color="#eaf6d8"/><stop offset="1" stop-color="#f8fcf0"/></linearGradient><linearGradient id="cyl" x1="0" y1="0" x2="1" y2="0"><stop offset="0" stop-color="#f8d040"/><stop offset="1" stop-color="#e89a10"/></linearGradient></defs>
<rect x="0.5" y="1.5" width="14" height="12" fill="url(#dsg)" stroke="#a8a8a8"/>
<rect x="1" y="1" width="13.5" height="2.5" fill="#4a90d8"/>
<path d="M6.5 7 Q10.8 5.6 15 7 L15 15 Q10.8 16.4 6.5 15 Z" fill="url(#cyl)" stroke="#a87a20" stroke-width="1"/>
<ellipse cx="10.8" cy="7.3" rx="3.6" ry="1" fill="#fff2b0"/>
<path d="M9 8.5 L9 14.5" stroke="#fff6c8" stroke-width="1.2"/></svg>
<div class="t " style="left:146px;top:393.00px;font-size:17px;line-height:20px;color:#000;letter-spacing:-0.1px">portal.datasetx</div>
<div style="position:absolute;left:123px;top:414px;width:184px;height:23px;background:#d9d9d9"></div>
<svg style="position:absolute;left:110px;top:421px;" width="7" height="11" viewBox="0 0 7 11"><path d="M1.5 1.5 L5.5 5.5 L1.5 9.5" fill="none" stroke="#a0a0a0" stroke-width="1.4"/></svg>
<svg style="position:absolute;left:125px;top:417px;" width="17" height="17" viewBox="0 0 17 17"><defs><linearGradient id="dsg" x1="0" y1="0" x2="0" y2="1"><stop offset="0" stop-color="#c4e88a"/><stop offset="0.7" stop-color="#eaf6d8"/><stop offset="1" stop-color="#f8fcf0"/></linearGradient><linearGradient id="cyl" x1="0" y1="0" x2="1" y2="0"><stop offset="0" stop-color="#f8d040"/><stop offset="1" stop-color="#e89a10"/></linearGradient></defs>
<rect x="0.5" y="1.5" width="14" height="12" fill="url(#dsg)" stroke="#a8a8a8"/>
<rect x="1" y="1" width="13.5" height="2.5" fill="#4a90d8"/>
<path d="M6.5 7 Q10.8 5.6 15 7 L15 15 Q10.8 16.4 6.5 15 Z" fill="url(#cyl)" stroke="#a87a20" stroke-width="1"/>
<ellipse cx="10.8" cy="7.3" rx="3.6" ry="1" fill="#fff2b0"/>
<path d="M9 8.5 L9 14.5" stroke="#fff6c8" stroke-width="1.2"/></svg>
<div class="t " style="left:146px;top:416.00px;font-size:17px;line-height:20px;color:#000;letter-spacing:-0.22px">pubresource.datasetx</div>
<svg style="position:absolute;left:110px;top:444px;" width="7" height="11" viewBox="0 0 7 11"><path d="M1.5 1.5 L5.5 5.5 L1.5 9.5" fill="none" stroke="#a0a0a0" stroke-width="1.4"/></svg>
<svg style="position:absolute;left:125px;top:440px;" width="17" height="17" viewBox="0 0 17 17"><defs><linearGradient id="dsg" x1="0" y1="0" x2="0" y2="1"><stop offset="0" stop-color="#c4e88a"/><stop offset="0.7" stop-color="#eaf6d8"/><stop offset="1" stop-color="#f8fcf0"/></linearGradient><linearGradient id="cyl" x1="0" y1="0" x2="1" y2="0"><stop offset="0" stop-color="#f8d040"/><stop offset="1" stop-color="#e89a10"/></linearGradient></defs>
<rect x="0.5" y="1.5" width="14" height="12" fill="url(#dsg)" stroke="#a8a8a8"/>
<rect x="1" y="1" width="13.5" height="2.5" fill="#4a90d8"/>
<path d="M6.5 7 Q10.8 5.6 15 7 L15 15 Q10.8 16.4 6.5 15 Z" fill="url(#cyl)" stroke="#a87a20" stroke-width="1"/>
<ellipse cx="10.8" cy="7.3" rx="3.6" ry="1" fill="#fff2b0"/>
<path d="M9 8.5 L9 14.5" stroke="#fff6c8" stroke-width="1.2"/></svg>
<div class="t " style="left:146px;top:439.00px;font-size:17px;line-height:20px;color:#000;letter-spacing:-0.3px">resource.datasetx</div>
<svg style="position:absolute;left:110px;top:467px;" width="7" height="11" viewBox="0 0 7 11"><path d="M1.5 1.5 L5.5 5.5 L1.5 9.5" fill="none" stroke="#a0a0a0" stroke-width="1.4"/></svg>
<svg style="position:absolute;left:125px;top:463px;" width="17" height="17" viewBox="0 0 17 17"><defs><linearGradient id="dsg" x1="0" y1="0" x2="0" y2="1"><stop offset="0" stop-color="#c4e88a"/><stop offset="0.7" stop-color="#eaf6d8"/><stop offset="1" stop-color="#f8fcf0"/></linearGradient><linearGradient id="cyl" x1="0" y1="0" x2="1" y2="0"><stop offset="0" stop-color="#f8d040"/><stop offset="1" stop-color="#e89a10"/></linearGradient></defs>
<rect x="0.5" y="1.5" width="14" height="12" fill="url(#dsg)" stroke="#a8a8a8"/>
<rect x="1" y="1" width="13.5" height="2.5" fill="#4a90d8"/>
<path d="M6.5 7 Q10.8 5.6 15 7 L15 15 Q10.8 16.4 6.5 15 Z" fill="url(#cyl)" stroke="#a87a20" stroke-width="1"/>
<ellipse cx="10.8" cy="7.3" rx="3.6" ry="1" fill="#fff2b0"/>
<path d="M9 8.5 L9 14.5" stroke="#fff6c8" stroke-width="1.2"/></svg>
<div class="t " style="left:146px;top:462.00px;font-size:17px;line-height:20px;color:#000;letter-spacing:-0.27px">safety.datasetx</div>
<svg style="position:absolute;left:110px;top:490px;" width="7" height="11" viewBox="0 0 7 11"><path d="M1.5 1.5 L5.5 5.5 L1.5 9.5" fill="none" stroke="#a0a0a0" stroke-width="1.4"/></svg>
<svg style="position:absolute;left:125px;top:486px;" width="17" height="17" viewBox="0 0 17 17"><defs><linearGradient id="dsg" x1="0" y1="0" x2="0" y2="1"><stop offset="0" stop-color="#c4e88a"/><stop offset="0.7" stop-color="#eaf6d8"/><stop offset="1" stop-color="#f8fcf0"/></linearGradient><linearGradient id="cyl" x1="0" y1="0" x2="1" y2="0"><stop offset="0" stop-color="#f8d040"/><stop offset="1" stop-color="#e89a10"/></linearGradient></defs>
<rect x="0.5" y="1.5" width="14" height="12" fill="url(#dsg)" stroke="#a8a8a8"/>
<rect x="1" y="1" width="13.5" height="2.5" fill="#4a90d8"/>
<path d="M6.5 7 Q10.8 5.6 15 7 L15 15 Q10.8 16.4 6.5 15 Z" fill="url(#cyl)" stroke="#a87a20" stroke-width="1"/>
<ellipse cx="10.8" cy="7.3" rx="3.6" ry="1" fill="#fff2b0"/>
<path d="M9 8.5 L9 14.5" stroke="#fff6c8" stroke-width="1.2"/></svg>
<div class="t " style="left:146px;top:485.00px;font-size:17px;line-height:20px;color:#000;letter-spacing:-0.36px">systemvariable.datasetx</div>
<svg style="position:absolute;left:110px;top:513px;" width="7" height="11" viewBox="0 0 7 11"><path d="M1.5 1.5 L5.5 5.5 L1.5 9.5" fill="none" stroke="#a0a0a0" stroke-width="1.4"/></svg>
<svg style="position:absolute;left:125px;top:509px;" width="17" height="17" viewBox="0 0 17 17"><defs><linearGradient id="dsg" x1="0" y1="0" x2="0" y2="1"><stop offset="0" stop-color="#c4e88a"/><stop offset="0.7" stop-color="#eaf6d8"/><stop offset="1" stop-color="#f8fcf0"/></linearGradient><linearGradient id="cyl" x1="0" y1="0" x2="1" y2="0"><stop offset="0" stop-color="#f8d040"/><stop offset="1" stop-color="#e89a10"/></linearGradient></defs>
<rect x="0.5" y="1.5" width="14" height="12" fill="url(#dsg)" stroke="#a8a8a8"/>
<rect x="1" y="1" width="13.5" height="2.5" fill="#4a90d8"/>
<path d="M6.5 7 Q10.8 5.6 15 7 L15 15 Q10.8 16.4 6.5 15 Z" fill="url(#cyl)" stroke="#a87a20" stroke-width="1"/>
<ellipse cx="10.8" cy="7.3" rx="3.6" ry="1" fill="#fff2b0"/>
<path d="M9 8.5 L9 14.5" stroke="#fff6c8" stroke-width="1.2"/></svg>
<div class="t " style="left:146px;top:508.00px;font-size:17px;line-height:20px;color:#000;letter-spacing:-0.13px">template.datasetx</div>
<svg style="position:absolute;left:105px;top:532px;" width="17" height="17" viewBox="0 0 17 17"><path d="M9 14.5 L3.5 14.5 L3.5 3.5 L14.5 3.5 L14.5 8" fill="#eef4fc" stroke="#5a5a5a"/><path d="M8.5 2 L8.5 16 M2 8.5 L9 8.5" stroke="#5a5a5a"/><path d="M10.6 10.6 Q10.8 9 12.4 9 Q14.2 9 14.2 10.6 Q14.2 11.6 12.8 12.3 L12.6 13.2" fill="none" stroke="#fff" stroke-width="3"/><path d="M10.6 10.6 Q10.8 9 12.4 9 Q14.2 9 14.2 10.6 Q14.2 11.6 12.8 12.3 L12.6 13.2" fill="none" stroke="#1a1a9a" stroke-width="1.5"/><rect x="11.8" y="14.4" width="1.6" height="1.4" fill="#1a1a9a"/></svg>
<div class="t " style="left:126px;top:531.00px;font-size:17px;line-height:20px;color:#000;">com.primeton.gocom.afcenter.model</div>
<svg style="position:absolute;left:105px;top:555px;" width="17" height="17" viewBox="0 0 17 17"><path d="M9 14.5 L3.5 14.5 L3.5 3.5 L14.5 3.5 L14.5 8" fill="#eef4fc" stroke="#5a5a5a"/><path d="M8.5 2 L8.5 16 M2 8.5 L9 8.5" stroke="#5a5a5a"/><path d="M10.6 10.6 Q10.8 9 12.4 9 Q14.2 9 14.2 10.6 Q14.2 11.6 12.8 12.3 L12.6 13.2" fill="none" stroke="#fff" stroke-width="3"/><path d="M10.6 10.6 Q10.8 9 12.4 9 Q14.2 9 14.2 10.6 Q14.2 11.6 12.8 12.3 L12.6 13.2" fill="none" stroke="#1a1a9a" stroke-width="1.5"/><rect x="11.8" y="14.4" width="1.6" height="1.4" fill="#1a1a9a"/></svg>
<div class="t " style="left:126px;top:554.00px;font-size:17px;line-height:20px;color:#000;">com.primeton.gocom.afcenter.model</div>
<svg style="position:absolute;left:105px;top:578px;" width="17" height="17" viewBox="0 0 17 17"><path d="M9 14.5 L3.5 14.5 L3.5 3.5 L14.5 3.5 L14.5 8" fill="#eef4fc" stroke="#5a5a5a"/><path d="M8.5 2 L8.5 16 M2 8.5 L9 8.5" stroke="#5a5a5a"/><path d="M10.6 10.6 Q10.8 9 12.4 9 Q14.2 9 14.2 10.6 Q14.2 11.6 12.8 12.3 L12.6 13.2" fill="none" stroke="#fff" stroke-width="3"/><path d="M10.6 10.6 Q10.8 9 12.4 9 Q14.2 9 14.2 10.6 Q14.2 11.6 12.8 12.3 L12.6 13.2" fill="none" stroke="#1a1a9a" stroke-width="1.5"/><rect x="11.8" y="14.4" width="1.6" height="1.4" fill="#1a1a9a"/></svg>
<div class="t " style="left:126px;top:577.00px;font-size:17px;line-height:20px;color:#000;">com.primeton.gocom.afcenter.model</div>
<svg style="position:absolute;left:105px;top:601px;" width="17" height="17" viewBox="0 0 17 17"><path d="M9 14.5 L3.5 14.5 L3.5 3.5 L14.5 3.5 L14.5 8" fill="#eef4fc" stroke="#5a5a5a"/><path d="M8.5 2 L8.5 16 M2 8.5 L9 8.5" stroke="#5a5a5a"/><path d="M10.6 10.6 Q10.8 9 12.4 9 Q14.2 9 14.2 10.6 Q14.2 11.6 12.8 12.3 L12.6 13.2" fill="none" stroke="#fff" stroke-width="3"/><path d="M10.6 10.6 Q10.8 9 12.4 9 Q14.2 9 14.2 10.6 Q14.2 11.6 12.8 12.3 L12.6 13.2" fill="none" stroke="#1a1a9a" stroke-width="1.5"/><rect x="11.8" y="14.4" width="1.6" height="1.4" fill="#1a1a9a"/></svg>
<div class="t " style="left:126px;top:600.00px;font-size:17px;line-height:20px;color:#000;">com.primeton.gocom.afcenter.model</div>
<svg style="position:absolute;left:105px;top:624px;" width="17" height="17" viewBox="0 0 17 17"><path d="M9 14.5 L3.5 14.5 L3.5 3.5 L14.5 3.5 L14.5 8" fill="#eef4fc" stroke="#5a5a5a"/><path d="M8.5 2 L8.5 16 M2 8.5 L9 8.5" stroke="#5a5a5a"/><path d="M10.6 10.6 Q10.8 9 12.4 9 Q14.2 9 14.2 10.6 Q14.2 11.6 12.8 12.3 L12.6 13.2" fill="none" stroke="#fff" stroke-width="3"/><path d="M10.6 10.6 Q10.8 9 12.4 9 Q14.2 9 14.2 10.6 Q14.2 11.6 12.8 12.3 L12.6 13.2" fill="none" stroke="#1a1a9a" stroke-width="1.5"/><rect x="11.8" y="14.4" width="1.6" height="1.4" fill="#1a1a9a"/></svg>
<div class="t " style="left:126px;top:623.00px;font-size:17px;line-height:20px;color:#000;">com.primeton.gocom.afcenter.model</div>
</div>
<div style="position:absolute;left:344px;top:117px;width:19px;height:635px;background:#f0f0f0"></div>
<div style="position:absolute;left:344px;top:162px;width:19px;height:216px;background:#c8c8c8"></div>
<svg style="position:absolute;left:348px;top:124px;" width="11" height="8" viewBox="0 0 11 8"><path d="M1 6.5 L5.5 2 L10 6.5" fill="none" stroke="#555" stroke-width="1.9"/></svg>
<svg style="position:absolute;left:348px;top:736px;" width="11" height="8" viewBox="0 0 11 8"><path d="M1 1.5 L5.5 6 L10 1.5" fill="none" stroke="#555" stroke-width="1.9"/></svg>
<div style="position:absolute;left:4px;top:752px;width:360px;height:19px;background:#f0f0f0"></div>
<div style="position:absolute;left:25px;top:752px;width:199px;height:19px;background:#c8c8c8"></div>
<svg style="position:absolute;left:10px;top:756px;" width="8" height="11" viewBox="0 0 8 11"><path d="M6 1.2 L1.8 5.5 L6 9.8" fill="none" stroke="#555" stroke-width="1.9"/></svg>
<svg style="position:absolute;left:328px;top:756px;" width="8" height="11" viewBox="0 0 8 11"><path d="M1.5 1.2 L5.7 5.5 L1.5 9.8" fill="none" stroke="#555" stroke-width="1.9"/></svg>
<div style="position:absolute;left:1px;top:779px;width:366px;height:140px;background:#fff;border:1px solid #fff;border-radius:7px;box-sizing:border-box"></div>
<div style="position:absolute;left:2px;top:780px;width:364px;height:28px;background:#f1f3f9;border-radius:6px 6px 0 0"></div>
<div style="position:absolute;left:2px;top:780px;width:168px;height:29px;background:linear-gradient(#dae1eb,#fdfdfe);border-radius:6px 8px 0 0"></div>
<div class="t " style="left:25px;top:787.00px;font-size:15px;line-height:18px;color:#000;"><span class="c">数据源资源管理器</span></div>
<svg style="position:absolute;left:153px;top:790px;" width="11" height="11" viewBox="0 0 11 11"><path d="M0.5 0.5 L3.5 0.5 L5.5 2.5 L7.5 0.5 L10.5 0.5 L10.5 3.5 L8.5 5.5 L10.5 7.5 L10.5 10.5 L7.5 10.5 L5.5 8.5 L3.5 10.5 L0.5 10.5 L0.5 7.5 L2.5 5.5 L0.5 3.5 Z" fill="#fff" stroke="#505050" stroke-width="1"/></svg>
<div class="t " style="left:194px;top:787.00px;font-size:15px;line-height:18px;color:#8a8a8a;"><span class="c">大纲</span></div>
<svg style="position:absolute;left:319px;top:787px;" width="10" height="4" viewBox="0 0 10 4"><rect x="0.5" y="0.5" width="9" height="3" fill="#fff" stroke="#606060"/></svg>
<svg style="position:absolute;left:342px;top:787px;" width="10" height="10" viewBox="0 0 10 10"><rect x="0.5" y="0.5" width="9" height="9" fill="#fff" stroke="#606060"/><path d="M0.5 2.5 L9.5 2.5" stroke="#606060"/></svg>
<svg style="position:absolute;left:6px;top:786px;" width="17" height="17" viewBox="0 0 17 17"><path d="M0.5 1 L4 3.8 L8 1 L12 3.8 L14.5 1 L14.5 13 L12 15.8 L8 13 L4 15.8 L0.5 13 Z" fill="#b4ec3c" stroke="#5a5a48"/><path d="M4 3.8 L4 15.8 M8 1 L8 13" stroke="#8ab030"/><path d="M1 6.5 Q4 9.5 7 7.5 Q9.5 6 12 7" stroke="#3a78c0" stroke-width="1.6" fill="none"/><rect x="10.5" y="5.5" width="5" height="10" fill="#f2eed8" stroke="#5a5a40"/><path d="M10.5 9 L15.5 9 M10.5 12.2 L15.5 12.2" stroke="#5a5a40"/><rect x="13" y="7" width="1.5" height="1.5" fill="#e02020"/></svg>
<svg style="position:absolute;left:176px;top:787px;" width="15" height="15" viewBox="0 0 15 15"><rect x="0.5" y="0.5" width="4" height="4" fill="#fff" stroke="#5a8ac8"/><rect x="0.5" y="10.5" width="4" height="4" fill="#fff" stroke="#5a8ac8"/><rect x="6.5" y="5.5" width="4" height="4" fill="#fff" stroke="#5a8ac8"/><path d="M7 2.5 L14 2.5 M12 7.5 L14 7.5 M7 12.5 L14 12.5" stroke="#5a8ac8"/></svg>
<svg style="position:absolute;left:145px;top:816px;" width="14" height="14" viewBox="0 0 14 14"><rect x="0.5" y="0.5" width="10" height="10" fill="#e4eefa" stroke="#a0acc8"/><rect x="3.5" y="3.5" width="10" height="10" fill="#f0f6fc" stroke="#8894b4"/><path d="M5 9 L12 9" stroke="#1f3f8a" stroke-width="1.5"/></svg>
<svg style="position:absolute;left:168px;top:814px;" width="17" height="17" viewBox="0 0 17 17"><path d="M0.8 4.5 L5 0.8 L5 3.5 L12 3.5 L12 5.5 L5 5.5 L5 8.2 Z" fill="#fff4c8" stroke="#c8861a" stroke-width="1.1" stroke-linejoin="round"/><path d="M15.8 11.5 L10.8 7.5 L10.8 10.5 L3.8 10.5 L3.8 12.5 L10.8 12.5 L10.8 15.5 Z" fill="#fff4c8" stroke="#c8861a" stroke-width="1.1" stroke-linejoin="round"/></svg>
<div style="position:absolute;left:188px;top:813px;width:1px;height:18px;background:#808080"></div>
<div style="position:absolute;left:195px;top:811px;width:23px;height:21px;background:#cde6f9;border:1px solid #99c9ef;box-sizing:border-box"></div>
<svg style="position:absolute;left:199px;top:814px;" width="14" height="15" viewBox="0 0 14 15"><rect x="0.5" y="0.5" width="4" height="3" fill="#fff" stroke="#4a7ab8"/><rect x="7.5" y="5.5" width="5" height="3" fill="#fff" stroke="#4a7ab8"/><rect x="7.5" y="11.5" width="5" height="3" fill="#fff" stroke="#4a7ab8"/><path d="M2.5 3.5 L2.5 13 L7.5 13 M2.5 7 L7.5 7" stroke="#4a7ab8" fill="none"/></svg>
<div style="position:absolute;left:220px;top:813px;width:1px;height:18px;background:#808080"></div>
<svg style="position:absolute;left:228px;top:813px;" width="17" height="15" viewBox="0 0 17 15"><path d="M1 8 Q4 3 9 5 L13 5 L13 9 L9 9 Q6 12 1 8 Z" fill="#f0b820" stroke="#8a6010"/><path d="M13 1 L13 7 M10 4 L16 4" stroke="#f0c040" stroke-width="1.5"/></svg>
<div style="position:absolute;left:250px;top:813px;width:1px;height:18px;background:#808080"></div>
<svg style="position:absolute;left:258px;top:813px;" width="17" height="16" viewBox="0 0 17 16"><path d="M1 8 L1 15 L16 15 L16 8" fill="none" stroke="#3a6ab0" stroke-width="2"/><path d="M4 1 L11 8 M11 4 L11 8 L7 8" stroke="#3a6ab0" stroke-width="1.3" fill="none"/></svg>
<svg style="position:absolute;left:281px;top:813px;" width="17" height="16" viewBox="0 0 17 16"><path d="M1 8 L1 15 L16 15 L16 8" fill="none" stroke="#3a6ab0" stroke-width="2"/><path d="M5 11 L13 2 M9 2 L13 2 L13 6" stroke="#3a6ab0" stroke-width="1.3" fill="none"/></svg>
<div style="position:absolute;left:303px;top:813px;width:1px;height:18px;background:#808080"></div>
<svg style="position:absolute;left:314px;top:814px;" width="15" height="16" viewBox="0 0 15 16"><rect x="1" y="0.5" width="10" height="15" fill="#5a8ad8" stroke="#2a5aa8"/><rect x="4.5" y="6.5" width="10" height="9" fill="#f0f4fa" stroke="#7a8aa8"/><path d="M6.5 10 L12.5 10 M6.5 12.5 L12.5 12.5" stroke="#7a8aa8"/></svg>
<svg style="position:absolute;left:344px;top:816px;" width="12" height="7" viewBox="0 0 12 7"><path d="M0.5 0.5 L11.5 0.5 L6 6 Z" fill="#fff" stroke="#555" stroke-width="1"/></svg>
<svg style="position:absolute;left:9px;top:842px;" width="11" height="7" viewBox="0 0 11 7"><path d="M1 1.5 L5 5.5 L9 1.5" fill="none" stroke="#3c3c3c" stroke-width="1.6"/></svg>
<svg style="position:absolute;left:28px;top:838px;" width="17" height="15" viewBox="0 0 17 15">
<path d="M0.5 3 Q0.5 1.5 2 1.5 L5 1.5 L6.5 3 L12 3 L12 6 L0.5 12.5 Z" fill="#f3d49a" stroke="#b47a2e" stroke-width="1"/>
<path d="M0.5 12.5 L3.5 6.5 L15.5 6.5 L12.5 12.5 Z" fill="#f8e0b0" stroke="#b47a2e" stroke-width="1"/></svg>
<div class="t " style="left:48px;top:835.00px;font-size:16.2px;line-height:19px;color:#000;">ODA <span class="c">数据源</span></div>
<svg style="position:absolute;left:48px;top:861px;" width="17" height="15" viewBox="0 0 17 15">
<path d="M0.5 3 Q0.5 1.5 2 1.5 L5 1.5 L6.5 3 L12 3 L12 6 L0.5 12.5 Z" fill="#f3d49a" stroke="#b47a2e" stroke-width="1"/>
<path d="M0.5 12.5 L3.5 6.5 L15.5 6.5 L12.5 12.5 Z" fill="#f8e0b0" stroke="#b47a2e" stroke-width="1"/></svg>
<div class="t " style="left:68px;top:858.00px;font-size:16.2px;line-height:19px;color:#000;">Web Services <span class="c">数据源</span></div>
<svg style="position:absolute;left:48px;top:884px;" width="17" height="15" viewBox="0 0 17 15">
<path d="M0.5 3 Q0.5 1.5 2 1.5 L5 1.5 L6.5 3 L12 3 L12 6 L0.5 12.5 Z" fill="#f3d49a" stroke="#b47a2e" stroke-width="1"/>
<path d="M0.5 12.5 L3.5 6.5 L15.5 6.5 L12.5 12.5 Z" fill="#f8e0b0" stroke="#b47a2e" stroke-width="1"/></svg>
<div class="t " style="left:68px;top:881.00px;font-size:16.2px;line-height:19px;color:#000;">XML <span class="c">数据源</span></div>
<div style="position:absolute;left:371px;top:63px;width:1209px;height:850px;background:#fff;border:1px solid #b4b4b8;border-radius:7px;box-sizing:border-box"></div>
<div style="position:absolute;left:372px;top:64px;width:1207px;height:28px;background:#cfdeee;border-radius:6px 6px 0 0"></div>
<div style="position:absolute;left:372px;top:92px;width:1207px;height:1px;background:#b4bccc"></div>
<div style="position:absolute;left:372px;top:64px;width:215px;height:29px;background:#fff;border-radius:6px 7px 0 0;border-right:1px solid #b4bccc;box-sizing:border-box"></div>
<div class="t " style="left:396px;top:70.00px;font-size:17px;line-height:20px;color:#000;letter-spacing:-0.24px">*pubresource.datasetx</div>
<svg style="position:absolute;left:569px;top:74px;" width="11" height="11" viewBox="0 0 11 11"><path d="M0.5 0.5 L3.5 0.5 L5.5 2.5 L7.5 0.5 L10.5 0.5 L10.5 3.5 L8.5 5.5 L10.5 7.5 L10.5 10.5 L7.5 10.5 L5.5 8.5 L3.5 10.5 L0.5 10.5 L0.5 7.5 L2.5 5.5 L0.5 3.5 Z" fill="#fff" stroke="#505050" stroke-width="1"/></svg>
<svg style="position:absolute;left:1532px;top:71px;" width="10" height="4" viewBox="0 0 10 4"><rect x="0.5" y="0.5" width="9" height="3" fill="#fff" stroke="#606060"/></svg>
<svg style="position:absolute;left:1555px;top:71px;" width="10" height="10" viewBox="0 0 10 10"><rect x="0.5" y="0.5" width="9" height="9" fill="#fff" stroke="#606060"/><path d="M0.5 2.5 L9.5 2.5" stroke="#606060"/></svg>
<div style="position:absolute;left:374px;top:95px;width:1203px;height:20px;background:#cedcec;border-bottom:1px solid #a0a0a0"></div>
<div class="t " style="left:374px;top:96.00px;font-size:17px;line-height:20px;color:#000;">com.primeton.gocom.afcenter.model/src/com/primeton/gocom/afcenter/model/pubresource.datasetx</div>
<div style="position:absolute;left:375px;top:117px;width:122px;height:789px;background:#fff;border-right:1px solid #a8a8a8"></div>
<div style="position:absolute;left:375px;top:117px;width:121px;height:27px;background:linear-gradient(#fff,#f3f3f3)"></div>
<div class="t " style="left:424px;top:123.00px;font-size:17px;line-height:20px;color:#000;">Palette</div>
<div style="position:absolute;left:388px;top:148px;width:92px;height:25px;background:#cde3f8;border-radius:2px"></div>
<div class="t " style="left:409px;top:151.00px;font-size:17px;line-height:20px;color:#000;">Select</div>
<div style="position:absolute;left:377px;top:176px;width:115px;height:1px;background:#9a9a9a"></div>
<div class="t " style="left:409px;top:184.00px;font-size:15px;line-height:18px;color:#000;"><span class="c">单向</span>1:1<span class="c">关联</span></div>
<div class="t " style="left:409px;top:211.00px;font-size:15px;line-height:18px;color:#000;"><span class="c">单向</span>1:n<span class="c">关联</span></div>
<div class="t " style="left:409px;top:238.00px;font-size:15px;line-height:18px;color:#000;"><span class="c">单向</span>n:1<span class="c">关联</span></div>
<div class="t " style="left:409px;top:265.00px;font-size:15px;line-height:18px;color:#000;"><span class="c">双向</span>1:n<span class="c">关联</span></div>
<div style="position:absolute;left:374px;top:289px;width:122px;height:1px;background:#a8a8a8"></div>
<div style="position:absolute;left:374px;top:291px;width:122px;height:1px;background:#dcdcdc"></div>
<div style="position:absolute;left:374px;top:292px;width:122px;height:23px;background:#f1f1f1"></div>
<div class="t " style="left:395px;top:295.00px;font-size:15px;line-height:18px;color:#000;"><span class="c">基本</span></div>
<div class="t " style="left:409px;top:322.00px;font-size:15px;line-height:18px;color:#000;"><span class="c">实体</span></div>
<div class="t " style="left:409px;top:349.00px;font-size:15px;line-height:18px;color:#000;"><span class="c">持久化实体</span></div>
<div class="t " style="left:409px;top:376.00px;font-size:15px;line-height:18px;color:#000;"><span class="c">查询实体</span></div>
<div class="t " style="left:409px;top:403.00px;font-size:15px;line-height:18px;color:#000;"><span class="c">注释</span></div>
<div style="position:absolute;left:498px;top:117px;width:1080px;height:18px;background:#fff;border-bottom:1px solid #9c9c9c;box-sizing:border-box"></div>
<div style="position:absolute;left:498px;top:117px;width:18px;height:17px;background:#c9d9ec"></div>
<div style="position:absolute;left:497px;top:134px;width:19px;height:772px;background:#fff;border-left:1px solid #9c9c9c;border-right:1px solid #9c9c9c;box-sizing:border-box"></div>
<div style="position:absolute;left:513px;top:135px;width:2px;height:771px;background:#f0f0f0"></div>
<div style="position:absolute;left:516px;top:132px;width:1061px;height:2px;background:#f0f0f0"></div>
<svg style="position:absolute;left:376px;top:71px;" width="17" height="17" viewBox="0 0 17 17"><defs><linearGradient id="dsg" x1="0" y1="0" x2="0" y2="1"><stop offset="0" stop-color="#c4e88a"/><stop offset="0.7" stop-color="#eaf6d8"/><stop offset="1" stop-color="#f8fcf0"/></linearGradient><linearGradient id="cyl" x1="0" y1="0" x2="1" y2="0"><stop offset="0" stop-color="#f8d040"/><stop offset="1" stop-color="#e89a10"/></linearGradient></defs>
<rect x="0.5" y="1.5" width="14" height="12" fill="url(#dsg)" stroke="#a8a8a8"/>
<rect x="1" y="1" width="13.5" height="2.5" fill="#4a90d8"/>
<path d="M6.5 7 Q10.8 5.6 15 7 L15 15 Q10.8 16.4 6.5 15 Z" fill="url(#cyl)" stroke="#a87a20" stroke-width="1"/>
<ellipse cx="10.8" cy="7.3" rx="3.6" ry="1" fill="#fff2b0"/>
<path d="M9 8.5 L9 14.5" stroke="#fff6c8" stroke-width="1.2"/></svg>
<svg style="position:absolute;left:384px;top:126px;" width="8" height="11" viewBox="0 0 8 11"><path d="M6.8 0.8 L6.8 10.2 L0.8 5.5 Z" fill="#fff" stroke="#555" stroke-width="1"/></svg>
<svg style="position:absolute;left:406px;top:123px;" width="15" height="15" viewBox="0 0 15 15"><circle cx="7.5" cy="7.5" r="7" fill="#f2f4f8" stroke="#c8d0e0"/><circle cx="5" cy="3.5" r="1.6" fill="#f8c020"/><circle cx="9.5" cy="3.5" r="1.6" fill="#30a030"/><circle cx="3" cy="7" r="1.6" fill="#f08020"/><circle cx="12" cy="7" r="1.6" fill="#30a030"/><circle cx="5" cy="11" r="1.5" fill="none" stroke="#e02020"/><circle cx="9.5" cy="11" r="1.5" fill="none" stroke="#2040e0"/></svg>
<div style="position:absolute;left:375px;top:144px;width:121px;height:1px;background:#8a8a8a"></div>
<svg style="position:absolute;left:393px;top:150px;" width="12" height="17" viewBox="0 0 12 17"><path d="M1 1 L1 14 L4 11 L6.5 16 L8.5 15 L6 10 L10.5 10 Z" fill="#fffbe0" stroke="#6a6a5a" stroke-width="1"/></svg>
<svg style="position:absolute;left:390px;top:183px;" width="16" height="10" viewBox="0 0 16 10"><path d="M0 4.5 L11 4.5" stroke="#1e78f0" stroke-width="1.4"/><path d="M10 0.5 L16 4.5 L10 8.5 Z" fill="#1e78f0"/></svg>
<svg style="position:absolute;left:390px;top:210px;" width="16" height="10" viewBox="0 0 16 10"><path d="M0 4.5 L11 4.5" stroke="#c030c0" stroke-width="1.4"/><path d="M10 0.5 L16 4.5 L10 8.5 Z" fill="#c030c0"/></svg>
<svg style="position:absolute;left:390px;top:237px;" width="16" height="10" viewBox="0 0 16 10"><path d="M0 4.5 L11 4.5" stroke="#40a830" stroke-width="1.4"/><path d="M10 0.5 L16 4.5 L10 8.5 Z" fill="#40a830"/></svg>
<div style="position:absolute;left:390px;top:269px;width:16px;height:1px;background:#c030c0"></div>
<svg style="position:absolute;left:377px;top:297px;" width="17" height="15" viewBox="0 0 17 15">
<path d="M0.5 3 Q0.5 1.5 2 1.5 L5 1.5 L6.5 3 L12 3 L12 6 L0.5 12.5 Z" fill="#f3d49a" stroke="#b47a2e" stroke-width="1"/>
<path d="M0.5 12.5 L3.5 6.5 L15.5 6.5 L12.5 12.5 Z" fill="#f8e0b0" stroke="#b47a2e" stroke-width="1"/></svg>
<svg style="position:absolute;left:481px;top:300px;" width="12" height="8" viewBox="0 0 12 8"><path d="M0.5 4 L4 0.8 L4 7.2 Z M11.5 4 L8 0.8 L8 7.2 Z" fill="#fff" stroke="#888" stroke-width="0.9"/><path d="M4 4 L8 4" stroke="#888"/></svg>
<svg style="position:absolute;left:390px;top:320px;" width="17" height="17" viewBox="0 0 17 17"><rect x="0.5" y="0.5" width="14" height="12" fill="#fff" stroke="#3a6ad8"/><rect x="1" y="1" width="13" height="4.5" fill="#5a8ae8"/><rect x="1" y="3" width="13" height="2.5" fill="#9ab8f0"/><rect x="7.5" y="7.5" width="8" height="8" fill="#fff" stroke="#6a6a6a"/><path d="M9.5 10 L13.5 10 M9.5 12 L13.5 12 M9.5 14 L13.5 14" stroke="#2a8a9a"/></svg>
<svg style="position:absolute;left:390px;top:347px;" width="17" height="17" viewBox="0 0 17 17"><rect x="0.5" y="0.5" width="14" height="12" fill="#fff" stroke="#48a028"/><rect x="1" y="1" width="13" height="5" fill="#78c850"/><rect x="1" y="3.5" width="13" height="2.5" fill="#b0e090"/><path d="M8 7 Q11.5 5.8 15.5 7 L15.5 14.5 Q11.5 15.7 8 14.5 Z" fill="#f0b820" stroke="#b88010"/><path d="M9.5 8 L9.5 14" stroke="#fce890" stroke-width="1.2"/></svg>
<svg style="position:absolute;left:390px;top:374px;" width="17" height="17" viewBox="0 0 17 17"><rect x="1.5" y="1.5" width="12" height="10" fill="#fff" stroke="#8a3ac0"/><rect x="2" y="2" width="11" height="4" fill="#b070e0"/><rect x="2" y="4" width="11" height="2" fill="#d8b8f0"/><circle cx="10" cy="10" r="3" fill="#d8f0ff" stroke="#5a8ab0" stroke-width="1.2"/><path d="M12 12 L15 15" stroke="#c8a040" stroke-width="2"/></svg>
<svg style="position:absolute;left:390px;top:401px;" width="17" height="17" viewBox="0 0 17 17"><path d="M0.5 2.5 L13.5 2.5 L13.5 11 L10.5 15.5 L0.5 15.5 Z" fill="#f8e080" stroke="#8a7020"/><path d="M10.5 15.5 L10.5 11.5 L13.5 11" fill="#e8c860" stroke="#8a7020"/><path d="M5 12 L14 3 L15.5 4.5 L6.5 13.5 L4.5 14 Z" fill="#f8f8f0" stroke="#404040" stroke-width="0.9"/><path d="M14 1.5 L16 3.5 L15 4.5 L13 2.5 Z" fill="#e04040"/></svg>
<svg style="position:absolute;left:0;top:0" width="1884" height="906"><rect x="531" y="124" width="1" height="2" fill="#000"/><rect x="546" y="124" width="1" height="2" fill="#000"/><rect x="561" y="124" width="1" height="2" fill="#000"/><rect x="576" y="123" width="1" height="4" fill="#000"/><rect x="591" y="124" width="1" height="2" fill="#000"/><rect x="606" y="124" width="1" height="2" fill="#000"/><rect x="621" y="124" width="1" height="2" fill="#000"/><rect x="651" y="124" width="1" height="2" fill="#000"/><rect x="666" y="124" width="1" height="2" fill="#000"/><rect x="681" y="124" width="1" height="2" fill="#000"/><rect x="696" y="123" width="1" height="4" fill="#000"/><rect x="711" y="124" width="1" height="2" fill="#000"/><rect x="726" y="124" width="1" height="2" fill="#000"/><rect x="741" y="124" width="1" height="2" fill="#000"/><rect x="771" y="124" width="1" height="2" fill="#000"/><rect x="786" y="124" width="1" height="2" fill="#000"/><rect x="801" y="124" width="1" height="2" fill="#000"/><rect x="816" y="123" width="1" height="4" fill="#000"/><rect x="831" y="124" width="1" height="2" fill="#000"/><rect x="846" y="124" width="1" height="2" fill="#000"/><rect x="861" y="124" width="1" height="2" fill="#000"/><rect x="891" y="124" width="1" height="2" fill="#000"/><rect x="906" y="124" width="1" height="2" fill="#000"/><rect x="921" y="124" width="1" height="2" fill="#000"/><rect x="936" y="123" width="1" height="4" fill="#000"/><rect x="951" y="124" width="1" height="2" fill="#000"/><rect x="966" y="124" width="1" height="2" fill="#000"/><rect x="981" y="124" width="1" height="2" fill="#000"/><rect x="1011" y="124" width="1" height="2" fill="#000"/><rect x="1026" y="124" width="1" height="2" fill="#000"/><rect x="1041" y="124" width="1" height="2" fill="#000"/><rect x="1056" y="123" width="1" height="4" fill="#000"/><rect x="1071" y="124" width="1" height="2" fill="#000"/><rect x="1086" y="124" width="1" height="2" fill="#000"/><rect x="1101" y="124" width="1" height="2" fill="#000"/><rect x="1131" y="124" width="1" height="2" fill="#000"/><rect x="1146" y="124" width="1" height="2" fill="#000"/><rect x="1161" y="124" width="1" height="2" fill="#000"/><rect x="1176" y="123" width="1" height="4" fill="#000"/><rect x="1191" y="124" width="1" height="2" fill="#000"/><rect x="1206" y="124" width="1" height="2" fill="#000"/><rect x="1221" y="124" width="1" height="2" fill="#000"/><rect x="1251" y="124" width="1" height="2" fill="#000"/><rect x="1266" y="124" width="1" height="2" fill="#000"/><rect x="1281" y="124" width="1" height="2" fill="#000"/><rect x="1296" y="123" width="1" height="4" fill="#000"/><rect x="1311" y="124" width="1" height="2" fill="#000"/><rect x="1326" y="124" width="1" height="2" fill="#000"/><rect x="1341" y="124" width="1" height="2" fill="#000"/><rect x="1371" y="124" width="1" height="2" fill="#000"/><rect x="1386" y="124" width="1" height="2" fill="#000"/><rect x="1401" y="124" width="1" height="2" fill="#000"/><rect x="1416" y="123" width="1" height="4" fill="#000"/><rect x="1431" y="124" width="1" height="2" fill="#000"/><rect x="1446" y="124" width="1" height="2" fill="#000"/><rect x="1461" y="124" width="1" height="2" fill="#000"/><rect x="1491" y="124" width="1" height="2" fill="#000"/><rect x="1506" y="124" width="1" height="2" fill="#000"/><rect x="1521" y="124" width="1" height="2" fill="#000"/><rect x="1536" y="123" width="1" height="4" fill="#000"/><rect x="1551" y="124" width="1" height="2" fill="#000"/><rect x="1566" y="124" width="1" height="2" fill="#000"/><rect x="505" y="150" width="2" height="1" fill="#000"/><rect x="505" y="165" width="2" height="1" fill="#000"/><rect x="505" y="180" width="2" height="1" fill="#000"/><rect x="504" y="195" width="4" height="1" fill="#000"/><rect x="505" y="210" width="2" height="1" fill="#000"/><rect x="505" y="225" width="2" height="1" fill="#000"/><rect x="505" y="240" width="2" height="1" fill="#000"/><rect x="505" y="270" width="2" height="1" fill="#000"/><rect x="505" y="285" width="2" height="1" fill="#000"/><rect x="505" y="300" width="2" height="1" fill="#000"/><rect x="504" y="315" width="4" height="1" fill="#000"/><rect x="505" y="330" width="2" height="1" fill="#000"/><rect x="505" y="345" width="2" height="1" fill="#000"/><rect x="505" y="360" width="2" height="1" fill="#000"/><rect x="505" y="390" width="2" height="1" fill="#000"/><rect x="505" y="405" width="2" height="1" fill="#000"/><rect x="505" y="420" width="2" height="1" fill="#000"/><rect x="504" y="435" width="4" height="1" fill="#000"/><rect x="505" y="450" width="2" height="1" fill="#000"/><rect x="505" y="465" width="2" height="1" fill="#000"/><rect x="505" y="480" width="2" height="1" fill="#000"/><rect x="505" y="510" width="2" height="1" fill="#000"/><rect x="505" y="525" width="2" height="1" fill="#000"/><rect x="505" y="540" width="2" height="1" fill="#000"/><rect x="504" y="555" width="4" height="1" fill="#000"/><rect x="505" y="570" width="2" height="1" fill="#000"/><rect x="505" y="585" width="2" height="1" fill="#000"/><rect x="505" y="600" width="2" height="1" fill="#000"/><rect x="505" y="630" width="2" height="1" fill="#000"/><rect x="505" y="645" width="2" height="1" fill="#000"/><rect x="505" y="660" width="2" height="1" fill="#000"/><rect x="504" y="675" width="4" height="1" fill="#000"/><rect x="505" y="690" width="2" height="1" fill="#000"/><rect x="505" y="705" width="2" height="1" fill="#000"/><rect x="505" y="720" width="2" height="1" fill="#000"/><rect x="505" y="750" width="2" height="1" fill="#000"/><rect x="505" y="765" width="2" height="1" fill="#000"/><rect x="505" y="780" width="2" height="1" fill="#000"/><rect x="504" y="795" width="4" height="1" fill="#000"/><rect x="505" y="810" width="2" height="1" fill="#000"/><rect x="505" y="825" width="2" height="1" fill="#000"/><rect x="505" y="840" width="2" height="1" fill="#000"/><rect x="505" y="870" width="2" height="1" fill="#000"/><rect x="505" y="885" width="2" height="1" fill="#000"/><rect x="505" y="900" width="2" height="1" fill="#000"/></svg>
<div class="t " style="left:632px;top:116.00px;font-size:14px;line-height:17px;color:#000;">1</div>
<div class="t " style="left:752px;top:116.00px;font-size:14px;line-height:17px;color:#000;">2</div>
<div class="t " style="left:872px;top:116.00px;font-size:14px;line-height:17px;color:#000;">3</div>
<div class="t " style="left:992px;top:116.00px;font-size:14px;line-height:17px;color:#000;">4</div>
<div class="t " style="left:1112px;top:116.00px;font-size:14px;line-height:17px;color:#000;">5</div>
<div class="t " style="left:1232px;top:116.00px;font-size:14px;line-height:17px;color:#000;">6</div>
<div class="t " style="left:1352px;top:116.00px;font-size:14px;line-height:17px;color:#000;">7</div>
<div class="t " style="left:1472px;top:116.00px;font-size:14px;line-height:17px;color:#000;">8</div>
<div class="t" style="left:506px;top:250px;font-size:14px;line-height:10px;transform:rotate(-90deg);transform-origin:50% 50%">1</div>
<div class="t" style="left:506px;top:370px;font-size:14px;line-height:10px;transform:rotate(-90deg);transform-origin:50% 50%">2</div>
<div class="t" style="left:506px;top:490px;font-size:14px;line-height:10px;transform:rotate(-90deg);transform-origin:50% 50%">3</div>
<div class="t" style="left:506px;top:610px;font-size:14px;line-height:10px;transform:rotate(-90deg);transform-origin:50% 50%">4</div>
<div class="t" style="left:506px;top:730px;font-size:14px;line-height:10px;transform:rotate(-90deg);transform-origin:50% 50%">5</div>
<div class="t" style="left:506px;top:850px;font-size:14px;line-height:10px;transform:rotate(-90deg);transform-origin:50% 50%">6</div>
<div class="t " style="left:512px;top:116.00px;font-size:14px;line-height:17px;color:#000;">0</div>
<div class="t" style="left:506px;top:130px;font-size:13.5px;line-height:10px;transform:rotate(-90deg);transform-origin:50% 50%">0</div>
<div style="position:absolute;left:497px;top:117px;width:19px;height:18px;background:#c9d9ec;border-left:1px solid #9c9c9c;border-right:1px solid #9c9c9c;border-bottom:1px solid #9c9c9c;box-sizing:border-box"></div>
<div style="position:absolute;left:762px;top:347px;width:150px;height:509px;background:#fff;border:1px solid #6aaa34;box-sizing:border-box"></div>
<svg style="position:absolute;left:787px;top:361px;" width="13" height="12" viewBox="0 0 13 12"><rect x="0.5" y="0.5" width="10" height="9" fill="#e8f4d0" stroke="#6ab040"/><rect x="1" y="1" width="9" height="2" fill="#8ac850"/><rect x="1" y="5" width="9" height="1.5" fill="#a8d878"/><path d="M7 4.5 Q9.5 3.5 12.5 4.5 L12.5 11 Q9.5 12.2 7 11 Z" fill="#f0c030" stroke="#c08a10" stroke-width="0.8"/></svg>
<div class="t " style="left:807px;top:357.00px;font-size:16.2px;line-height:19px;color:#000;">Datasource</div>
<div style="position:absolute;left:763px;top:376px;width:148px;height:1px;background:repeating-linear-gradient(90deg,#9a9a9a 0 1px,transparent 1px 3px)"></div>
<svg style="position:absolute;left:766px;top:382px;" width="16" height="14" viewBox="0 0 16 14"><path d="M0.8 5.2 Q1 3.6 2.6 3.4 L3.6 2.6 L4.8 3.4 L6 2.6 L7.2 3.4 L8.6 3.4 Q9.4 0.6 12 0.6 Q15.4 0.6 15.4 4.2 Q15.4 7.8 12 7.8 Q9.4 7.8 8.6 5.4 L2.4 6.6 Q0.8 6.6 0.8 5.2 Z" fill="#fbe24a" stroke="#c89a1a" stroke-width="0.9"/><circle cx="12" cy="4.2" r="1.2" fill="#6a5020"/><rect x="2" y="10" width="4" height="3" fill="#000"/><rect x="3" y="11" width="2" height="1" fill="#4aa04a"/><rect x="8" y="10" width="4" height="3" fill="#000"/><rect x="9" y="11" width="2" height="1" fill="#4aa04a"/></svg>
<div class="t " style="left:784px;top:380.00px;font-size:16.2px;line-height:19px;color:#000;white-space:pre">id  :String</div>
<svg style="position:absolute;left:769px;top:406px;" width="10" height="12" viewBox="0 0 10 12"><rect x="0" y="0" width="4" height="3" fill="#000"/><rect x="1" y="1" width="2" height="1" fill="#4aa04a"/><rect x="0" y="4" width="4" height="3" fill="#000"/><rect x="1" y="5" width="2" height="1" fill="#4aa04a"/><rect x="0" y="8" width="4" height="3" fill="#000"/><rect x="1" y="9" width="2" height="1" fill="#4aa04a"/><rect x="6" y="2" width="3" height="1" fill="#000"/><rect x="6" y="6" width="3" height="1" fill="#000"/><rect x="6" y="10" width="3" height="1" fill="#000"/></svg>
<div class="t " style="left:784px;top:402.00px;font-size:16.2px;line-height:19px;color:#000;white-space:pre">code  :String</div>
<svg style="position:absolute;left:769px;top:428px;" width="10" height="12" viewBox="0 0 10 12"><rect x="0" y="0" width="4" height="3" fill="#000"/><rect x="1" y="1" width="2" height="1" fill="#4aa04a"/><rect x="0" y="4" width="4" height="3" fill="#000"/><rect x="1" y="5" width="2" height="1" fill="#4aa04a"/><rect x="0" y="8" width="4" height="3" fill="#000"/><rect x="1" y="9" width="2" height="1" fill="#4aa04a"/><rect x="6" y="2" width="3" height="1" fill="#000"/><rect x="6" y="6" width="3" height="1" fill="#000"/><rect x="6" y="10" width="3" height="1" fill="#000"/></svg>
<div class="t " style="left:784px;top:424.00px;font-size:16.2px;line-height:19px;color:#000;white-space:pre">name  :String</div>
<svg style="position:absolute;left:769px;top:450px;" width="10" height="12" viewBox="0 0 10 12"><rect x="0" y="0" width="4" height="3" fill="#000"/><rect x="1" y="1" width="2" height="1" fill="#4aa04a"/><rect x="0" y="4" width="4" height="3" fill="#000"/><rect x="1" y="5" width="2" height="1" fill="#4aa04a"/><rect x="0" y="8" width="4" height="3" fill="#000"/><rect x="1" y="9" width="2" height="1" fill="#4aa04a"/><rect x="6" y="2" width="3" height="1" fill="#000"/><rect x="6" y="6" width="3" height="1" fill="#000"/><rect x="6" y="10" width="3" height="1" fill="#000"/></svg>
<div class="t " style="left:784px;top:446.00px;font-size:16.2px;line-height:19px;color:#000;white-space:pre">levels  :String</div>
<svg style="position:absolute;left:769px;top:472px;" width="10" height="12" viewBox="0 0 10 12"><rect x="0" y="0" width="4" height="3" fill="#000"/><rect x="1" y="1" width="2" height="1" fill="#4aa04a"/><rect x="0" y="4" width="4" height="3" fill="#000"/><rect x="1" y="5" width="2" height="1" fill="#4aa04a"/><rect x="0" y="8" width="4" height="3" fill="#000"/><rect x="1" y="9" width="2" height="1" fill="#4aa04a"/><rect x="6" y="2" width="3" height="1" fill="#000"/><rect x="6" y="6" width="3" height="1" fill="#000"/><rect x="6" y="10" width="3" height="1" fill="#000"/></svg>
<div class="t " style="left:784px;top:468.00px;font-size:16.2px;line-height:19px;color:#000;white-space:pre">owningSystem ...</div>
<svg style="position:absolute;left:769px;top:494px;" width="10" height="12" viewBox="0 0 10 12"><rect x="0" y="0" width="4" height="3" fill="#000"/><rect x="1" y="1" width="2" height="1" fill="#4aa04a"/><rect x="0" y="4" width="4" height="3" fill="#000"/><rect x="1" y="5" width="2" height="1" fill="#4aa04a"/><rect x="0" y="8" width="4" height="3" fill="#000"/><rect x="1" y="9" width="2" height="1" fill="#4aa04a"/><rect x="6" y="2" width="3" height="1" fill="#000"/><rect x="6" y="6" width="3" height="1" fill="#000"/><rect x="6" y="10" width="3" height="1" fill="#000"/></svg>
<div class="t " style="left:784px;top:490.00px;font-size:16.2px;line-height:19px;color:#000;white-space:pre">owningOrgId  :...</div>
<svg style="position:absolute;left:769px;top:516px;" width="10" height="12" viewBox="0 0 10 12"><rect x="0" y="0" width="4" height="3" fill="#000"/><rect x="1" y="1" width="2" height="1" fill="#4aa04a"/><rect x="0" y="4" width="4" height="3" fill="#000"/><rect x="1" y="5" width="2" height="1" fill="#4aa04a"/><rect x="0" y="8" width="4" height="3" fill="#000"/><rect x="1" y="9" width="2" height="1" fill="#4aa04a"/><rect x="6" y="2" width="3" height="1" fill="#000"/><rect x="6" y="6" width="3" height="1" fill="#000"/><rect x="6" y="10" width="3" height="1" fill="#000"/></svg>
<div class="t " style="left:784px;top:512.00px;font-size:16.2px;line-height:19px;color:#000;white-space:pre">owningOrgNa...</div>
<svg style="position:absolute;left:769px;top:538px;" width="10" height="12" viewBox="0 0 10 12"><rect x="0" y="0" width="4" height="3" fill="#000"/><rect x="1" y="1" width="2" height="1" fill="#4aa04a"/><rect x="0" y="4" width="4" height="3" fill="#000"/><rect x="1" y="5" width="2" height="1" fill="#4aa04a"/><rect x="0" y="8" width="4" height="3" fill="#000"/><rect x="1" y="9" width="2" height="1" fill="#4aa04a"/><rect x="6" y="2" width="3" height="1" fill="#000"/><rect x="6" y="6" width="3" height="1" fill="#000"/><rect x="6" y="10" width="3" height="1" fill="#000"/></svg>
<div class="t " style="left:784px;top:534.00px;font-size:16.2px;line-height:19px;color:#000;white-space:pre">useTo  :String</div>
<svg style="position:absolute;left:769px;top:560px;" width="10" height="12" viewBox="0 0 10 12"><rect x="0" y="0" width="4" height="3" fill="#000"/><rect x="1" y="1" width="2" height="1" fill="#4aa04a"/><rect x="0" y="4" width="4" height="3" fill="#000"/><rect x="1" y="5" width="2" height="1" fill="#4aa04a"/><rect x="0" y="8" width="4" height="3" fill="#000"/><rect x="1" y="9" width="2" height="1" fill="#4aa04a"/><rect x="6" y="2" width="3" height="1" fill="#000"/><rect x="6" y="6" width="3" height="1" fill="#000"/><rect x="6" y="10" width="3" height="1" fill="#000"/></svg>
<div class="t " style="left:784px;top:556.00px;font-size:16.2px;line-height:19px;color:#000;white-space:pre">remark  :String</div>
<svg style="position:absolute;left:769px;top:582px;" width="10" height="12" viewBox="0 0 10 12"><rect x="0" y="0" width="4" height="3" fill="#000"/><rect x="1" y="1" width="2" height="1" fill="#4aa04a"/><rect x="0" y="4" width="4" height="3" fill="#000"/><rect x="1" y="5" width="2" height="1" fill="#4aa04a"/><rect x="0" y="8" width="4" height="3" fill="#000"/><rect x="1" y="9" width="2" height="1" fill="#4aa04a"/><rect x="6" y="2" width="3" height="1" fill="#000"/><rect x="6" y="6" width="3" height="1" fill="#000"/><rect x="6" y="10" width="3" height="1" fill="#000"/></svg>
<div class="t " style="left:784px;top:578.00px;font-size:16.2px;line-height:19px;color:#000;white-space:pre;letter-spacing:-0.13px">devEngineType...</div>
<svg style="position:absolute;left:769px;top:604px;" width="10" height="12" viewBox="0 0 10 12"><rect x="0" y="0" width="4" height="3" fill="#000"/><rect x="1" y="1" width="2" height="1" fill="#4aa04a"/><rect x="0" y="4" width="4" height="3" fill="#000"/><rect x="1" y="5" width="2" height="1" fill="#4aa04a"/><rect x="0" y="8" width="4" height="3" fill="#000"/><rect x="1" y="9" width="2" height="1" fill="#4aa04a"/><rect x="6" y="2" width="3" height="1" fill="#000"/><rect x="6" y="6" width="3" height="1" fill="#000"/><rect x="6" y="10" width="3" height="1" fill="#000"/></svg>
<div class="t " style="left:784px;top:600.00px;font-size:16.2px;line-height:19px;color:#000;white-space:pre">devConnection...</div>
<svg style="position:absolute;left:769px;top:626px;" width="10" height="12" viewBox="0 0 10 12"><rect x="0" y="0" width="4" height="3" fill="#000"/><rect x="1" y="1" width="2" height="1" fill="#4aa04a"/><rect x="0" y="4" width="4" height="3" fill="#000"/><rect x="1" y="5" width="2" height="1" fill="#4aa04a"/><rect x="0" y="8" width="4" height="3" fill="#000"/><rect x="1" y="9" width="2" height="1" fill="#4aa04a"/><rect x="6" y="2" width="3" height="1" fill="#000"/><rect x="6" y="6" width="3" height="1" fill="#000"/><rect x="6" y="10" width="3" height="1" fill="#000"/></svg>
<div class="t " style="left:784px;top:622.00px;font-size:16.2px;line-height:19px;color:#000;white-space:pre;letter-spacing:-0.32px">devEngineId  :S...</div>
<svg style="position:absolute;left:769px;top:648px;" width="10" height="12" viewBox="0 0 10 12"><rect x="0" y="0" width="4" height="3" fill="#000"/><rect x="1" y="1" width="2" height="1" fill="#4aa04a"/><rect x="0" y="4" width="4" height="3" fill="#000"/><rect x="1" y="5" width="2" height="1" fill="#4aa04a"/><rect x="0" y="8" width="4" height="3" fill="#000"/><rect x="1" y="9" width="2" height="1" fill="#4aa04a"/><rect x="6" y="2" width="3" height="1" fill="#000"/><rect x="6" y="6" width="3" height="1" fill="#000"/><rect x="6" y="10" width="3" height="1" fill="#000"/></svg>
<div class="t " style="left:784px;top:644.00px;font-size:16.2px;line-height:19px;color:#000;white-space:pre">proEngineType...</div>
<svg style="position:absolute;left:769px;top:670px;" width="10" height="12" viewBox="0 0 10 12"><rect x="0" y="0" width="4" height="3" fill="#000"/><rect x="1" y="1" width="2" height="1" fill="#4aa04a"/><rect x="0" y="4" width="4" height="3" fill="#000"/><rect x="1" y="5" width="2" height="1" fill="#4aa04a"/><rect x="0" y="8" width="4" height="3" fill="#000"/><rect x="1" y="9" width="2" height="1" fill="#4aa04a"/><rect x="6" y="2" width="3" height="1" fill="#000"/><rect x="6" y="6" width="3" height="1" fill="#000"/><rect x="6" y="10" width="3" height="1" fill="#000"/></svg>
<div class="t " style="left:784px;top:666.00px;font-size:16.2px;line-height:19px;color:#000;white-space:pre;letter-spacing:0.14px">proConnection...</div>
<svg style="position:absolute;left:769px;top:692px;" width="10" height="12" viewBox="0 0 10 12"><rect x="0" y="0" width="4" height="3" fill="#000"/><rect x="1" y="1" width="2" height="1" fill="#4aa04a"/><rect x="0" y="4" width="4" height="3" fill="#000"/><rect x="1" y="5" width="2" height="1" fill="#4aa04a"/><rect x="0" y="8" width="4" height="3" fill="#000"/><rect x="1" y="9" width="2" height="1" fill="#4aa04a"/><rect x="6" y="2" width="3" height="1" fill="#000"/><rect x="6" y="6" width="3" height="1" fill="#000"/><rect x="6" y="10" width="3" height="1" fill="#000"/></svg>
<div class="t " style="left:784px;top:688.00px;font-size:16.2px;line-height:19px;color:#000;white-space:pre;letter-spacing:-0.23px">proEngineId  :S...</div>
<svg style="position:absolute;left:769px;top:714px;" width="10" height="12" viewBox="0 0 10 12"><rect x="0" y="0" width="4" height="3" fill="#000"/><rect x="1" y="1" width="2" height="1" fill="#4aa04a"/><rect x="0" y="4" width="4" height="3" fill="#000"/><rect x="1" y="5" width="2" height="1" fill="#4aa04a"/><rect x="0" y="8" width="4" height="3" fill="#000"/><rect x="1" y="9" width="2" height="1" fill="#4aa04a"/><rect x="6" y="2" width="3" height="1" fill="#000"/><rect x="6" y="6" width="3" height="1" fill="#000"/><rect x="6" y="10" width="3" height="1" fill="#000"/></svg>
<div class="t " style="left:784px;top:710.00px;font-size:16.2px;line-height:19px;color:#000;white-space:pre">status  :String</div>
<svg style="position:absolute;left:769px;top:736px;" width="10" height="12" viewBox="0 0 10 12"><rect x="0" y="0" width="4" height="3" fill="#000"/><rect x="1" y="1" width="2" height="1" fill="#4aa04a"/><rect x="0" y="4" width="4" height="3" fill="#000"/><rect x="1" y="5" width="2" height="1" fill="#4aa04a"/><rect x="0" y="8" width="4" height="3" fill="#000"/><rect x="1" y="9" width="2" height="1" fill="#4aa04a"/><rect x="6" y="2" width="3" height="1" fill="#000"/><rect x="6" y="6" width="3" height="1" fill="#000"/><rect x="6" y="10" width="3" height="1" fill="#000"/></svg>
<div class="t " style="left:784px;top:732.00px;font-size:16.2px;line-height:19px;color:#000;white-space:pre;letter-spacing:-0.16px">createUser  :Str...</div>
<svg style="position:absolute;left:769px;top:758px;" width="10" height="12" viewBox="0 0 10 12"><rect x="0" y="0" width="4" height="3" fill="#000"/><rect x="1" y="1" width="2" height="1" fill="#4aa04a"/><rect x="0" y="4" width="4" height="3" fill="#000"/><rect x="1" y="5" width="2" height="1" fill="#4aa04a"/><rect x="0" y="8" width="4" height="3" fill="#000"/><rect x="1" y="9" width="2" height="1" fill="#4aa04a"/><rect x="6" y="2" width="3" height="1" fill="#000"/><rect x="6" y="6" width="3" height="1" fill="#000"/><rect x="6" y="10" width="3" height="1" fill="#000"/></svg>
<div class="t " style="left:784px;top:754.00px;font-size:16.2px;line-height:19px;color:#000;white-space:pre;letter-spacing:-0.17px">updateUser  :St...</div>
<svg style="position:absolute;left:769px;top:780px;" width="10" height="12" viewBox="0 0 10 12"><rect x="0" y="0" width="4" height="3" fill="#000"/><rect x="1" y="1" width="2" height="1" fill="#4aa04a"/><rect x="0" y="4" width="4" height="3" fill="#000"/><rect x="1" y="5" width="2" height="1" fill="#4aa04a"/><rect x="0" y="8" width="4" height="3" fill="#000"/><rect x="1" y="9" width="2" height="1" fill="#4aa04a"/><rect x="6" y="2" width="3" height="1" fill="#000"/><rect x="6" y="6" width="3" height="1" fill="#000"/><rect x="6" y="10" width="3" height="1" fill="#000"/></svg>
<div class="t " style="left:784px;top:776.00px;font-size:16.2px;line-height:19px;color:#000;white-space:pre">createTime  :Ti...</div>
<svg style="position:absolute;left:769px;top:802px;" width="10" height="12" viewBox="0 0 10 12"><rect x="0" y="0" width="4" height="3" fill="#000"/><rect x="1" y="1" width="2" height="1" fill="#4aa04a"/><rect x="0" y="4" width="4" height="3" fill="#000"/><rect x="1" y="5" width="2" height="1" fill="#4aa04a"/><rect x="0" y="8" width="4" height="3" fill="#000"/><rect x="1" y="9" width="2" height="1" fill="#4aa04a"/><rect x="6" y="2" width="3" height="1" fill="#000"/><rect x="6" y="6" width="3" height="1" fill="#000"/><rect x="6" y="10" width="3" height="1" fill="#000"/></svg>
<div class="t " style="left:784px;top:798.00px;font-size:16.2px;line-height:19px;color:#000;white-space:pre">updateTime  :T...</div>
<svg style="position:absolute;left:769px;top:824px;" width="10" height="12" viewBox="0 0 10 12"><rect x="0" y="0" width="4" height="3" fill="#000"/><rect x="1" y="1" width="2" height="1" fill="#4aa04a"/><rect x="0" y="4" width="4" height="3" fill="#000"/><rect x="1" y="5" width="2" height="1" fill="#4aa04a"/><rect x="0" y="8" width="4" height="3" fill="#000"/><rect x="1" y="9" width="2" height="1" fill="#4aa04a"/><rect x="6" y="2" width="3" height="1" fill="#000"/><rect x="6" y="6" width="3" height="1" fill="#000"/><rect x="6" y="10" width="3" height="1" fill="#000"/></svg>
<div class="t " style="left:784px;top:820.00px;font-size:16.2px;line-height:19px;color:#000;white-space:pre">tenantId  :String</div>
<div style="position:absolute;left:763px;top:840px;width:148px;height:1px;background:repeating-linear-gradient(90deg,#9a9a9a 0 1px,transparent 1px 3px)"></div>
<div style="position:absolute;left:951px;top:325px;width:150px;height:430px;background:#fff;border:1px solid #6aaa34;box-sizing:border-box"></div>
<svg style="position:absolute;left:955px;top:339px;" width="13" height="12" viewBox="0 0 13 12"><rect x="0.5" y="0.5" width="10" height="9" fill="#e8f4d0" stroke="#6ab040"/><rect x="1" y="1" width="9" height="2" fill="#8ac850"/><rect x="1" y="5" width="9" height="1.5" fill="#a8d878"/><path d="M7 4.5 Q9.5 3.5 12.5 4.5 L12.5 11 Q9.5 12.2 7 11 Z" fill="#f0c030" stroke="#c08a10" stroke-width="0.8"/></svg>
<div class="t " style="left:974px;top:335.00px;font-size:16.2px;line-height:19px;color:#000;letter-spacing:-0.25px">DatasourceEngi...</div>
<div style="position:absolute;left:952px;top:354px;width:148px;height:1px;background:repeating-linear-gradient(90deg,#9a9a9a 0 1px,transparent 1px 3px)"></div>
<svg style="position:absolute;left:955px;top:360px;" width="16" height="14" viewBox="0 0 16 14"><path d="M0.8 5.2 Q1 3.6 2.6 3.4 L3.6 2.6 L4.8 3.4 L6 2.6 L7.2 3.4 L8.6 3.4 Q9.4 0.6 12 0.6 Q15.4 0.6 15.4 4.2 Q15.4 7.8 12 7.8 Q9.4 7.8 8.6 5.4 L2.4 6.6 Q0.8 6.6 0.8 5.2 Z" fill="#fbe24a" stroke="#c89a1a" stroke-width="0.9"/><circle cx="12" cy="4.2" r="1.2" fill="#6a5020"/><rect x="2" y="10" width="4" height="3" fill="#000"/><rect x="3" y="11" width="2" height="1" fill="#4aa04a"/><rect x="8" y="10" width="4" height="3" fill="#000"/><rect x="9" y="11" width="2" height="1" fill="#4aa04a"/></svg>
<div class="t " style="left:973px;top:358.00px;font-size:16.2px;line-height:19px;color:#000;white-space:pre">id  :String</div>
<svg style="position:absolute;left:958px;top:384px;" width="10" height="12" viewBox="0 0 10 12"><rect x="0" y="0" width="4" height="3" fill="#000"/><rect x="1" y="1" width="2" height="1" fill="#4aa04a"/><rect x="0" y="4" width="4" height="3" fill="#000"/><rect x="1" y="5" width="2" height="1" fill="#4aa04a"/><rect x="0" y="8" width="4" height="3" fill="#000"/><rect x="1" y="9" width="2" height="1" fill="#4aa04a"/><rect x="6" y="2" width="3" height="1" fill="#000"/><rect x="6" y="6" width="3" height="1" fill="#000"/><rect x="6" y="10" width="3" height="1" fill="#000"/></svg>
<div class="t " style="left:973px;top:380.00px;font-size:16.2px;line-height:19px;color:#000;white-space:pre">name  :String</div>
<svg style="position:absolute;left:958px;top:406px;" width="10" height="12" viewBox="0 0 10 12"><rect x="0" y="0" width="4" height="3" fill="#000"/><rect x="1" y="1" width="2" height="1" fill="#4aa04a"/><rect x="0" y="4" width="4" height="3" fill="#000"/><rect x="1" y="5" width="2" height="1" fill="#4aa04a"/><rect x="0" y="8" width="4" height="3" fill="#000"/><rect x="1" y="9" width="2" height="1" fill="#4aa04a"/><rect x="6" y="2" width="3" height="1" fill="#000"/><rect x="6" y="6" width="3" height="1" fill="#000"/><rect x="6" y="10" width="3" height="1" fill="#000"/></svg>
<div class="t " style="left:973px;top:402.00px;font-size:16.2px;line-height:19px;color:#000;white-space:pre">types  :String</div>
<svg style="position:absolute;left:958px;top:428px;" width="10" height="12" viewBox="0 0 10 12"><rect x="0" y="0" width="4" height="3" fill="#000"/><rect x="1" y="1" width="2" height="1" fill="#4aa04a"/><rect x="0" y="4" width="4" height="3" fill="#000"/><rect x="1" y="5" width="2" height="1" fill="#4aa04a"/><rect x="0" y="8" width="4" height="3" fill="#000"/><rect x="1" y="9" width="2" height="1" fill="#4aa04a"/><rect x="6" y="2" width="3" height="1" fill="#000"/><rect x="6" y="6" width="3" height="1" fill="#000"/><rect x="6" y="10" width="3" height="1" fill="#000"/></svg>
<div class="t " style="left:973px;top:424.00px;font-size:16.2px;line-height:19px;color:#000;white-space:pre">connectionIp  :...</div>
<svg style="position:absolute;left:958px;top:450px;" width="10" height="12" viewBox="0 0 10 12"><rect x="0" y="0" width="4" height="3" fill="#000"/><rect x="1" y="1" width="2" height="1" fill="#4aa04a"/><rect x="0" y="4" width="4" height="3" fill="#000"/><rect x="1" y="5" width="2" height="1" fill="#4aa04a"/><rect x="0" y="8" width="4" height="3" fill="#000"/><rect x="1" y="9" width="2" height="1" fill="#4aa04a"/><rect x="6" y="2" width="3" height="1" fill="#000"/><rect x="6" y="6" width="3" height="1" fill="#000"/><rect x="6" y="10" width="3" height="1" fill="#000"/></svg>
<div class="t " style="left:973px;top:446.00px;font-size:16.2px;line-height:19px;color:#000;white-space:pre;letter-spacing:0.13px">connectionPor...</div>
<svg style="position:absolute;left:958px;top:472px;" width="10" height="12" viewBox="0 0 10 12"><rect x="0" y="0" width="4" height="3" fill="#000"/><rect x="1" y="1" width="2" height="1" fill="#4aa04a"/><rect x="0" y="4" width="4" height="3" fill="#000"/><rect x="1" y="5" width="2" height="1" fill="#4aa04a"/><rect x="0" y="8" width="4" height="3" fill="#000"/><rect x="1" y="9" width="2" height="1" fill="#4aa04a"/><rect x="6" y="2" width="3" height="1" fill="#000"/><rect x="6" y="6" width="3" height="1" fill="#000"/><rect x="6" y="10" width="3" height="1" fill="#000"/></svg>
<div class="t " style="left:973px;top:468.00px;font-size:16.2px;line-height:19px;color:#000;white-space:pre">envType  :String</div>
<svg style="position:absolute;left:958px;top:494px;" width="10" height="12" viewBox="0 0 10 12"><rect x="0" y="0" width="4" height="3" fill="#000"/><rect x="1" y="1" width="2" height="1" fill="#4aa04a"/><rect x="0" y="4" width="4" height="3" fill="#000"/><rect x="1" y="5" width="2" height="1" fill="#4aa04a"/><rect x="0" y="8" width="4" height="3" fill="#000"/><rect x="1" y="9" width="2" height="1" fill="#4aa04a"/><rect x="6" y="2" width="3" height="1" fill="#000"/><rect x="6" y="6" width="3" height="1" fill="#000"/><rect x="6" y="10" width="3" height="1" fill="#000"/></svg>
<div class="t " style="left:973px;top:490.00px;font-size:16.2px;line-height:19px;color:#000;white-space:pre">levels  :String</div>
<svg style="position:absolute;left:958px;top:516px;" width="10" height="12" viewBox="0 0 10 12"><rect x="0" y="0" width="4" height="3" fill="#000"/><rect x="1" y="1" width="2" height="1" fill="#4aa04a"/><rect x="0" y="4" width="4" height="3" fill="#000"/><rect x="1" y="5" width="2" height="1" fill="#4aa04a"/><rect x="0" y="8" width="4" height="3" fill="#000"/><rect x="1" y="9" width="2" height="1" fill="#4aa04a"/><rect x="6" y="2" width="3" height="1" fill="#000"/><rect x="6" y="6" width="3" height="1" fill="#000"/><rect x="6" y="10" width="3" height="1" fill="#000"/></svg>
<div class="t " style="left:973px;top:512.00px;font-size:16.2px;line-height:19px;color:#000;white-space:pre">owningSystem ...</div>
<svg style="position:absolute;left:958px;top:538px;" width="10" height="12" viewBox="0 0 10 12"><rect x="0" y="0" width="4" height="3" fill="#000"/><rect x="1" y="1" width="2" height="1" fill="#4aa04a"/><rect x="0" y="4" width="4" height="3" fill="#000"/><rect x="1" y="5" width="2" height="1" fill="#4aa04a"/><rect x="0" y="8" width="4" height="3" fill="#000"/><rect x="1" y="9" width="2" height="1" fill="#4aa04a"/><rect x="6" y="2" width="3" height="1" fill="#000"/><rect x="6" y="6" width="3" height="1" fill="#000"/><rect x="6" y="10" width="3" height="1" fill="#000"/></svg>
<div class="t " style="left:973px;top:534.00px;font-size:16.2px;line-height:19px;color:#000;white-space:pre">owningOrgId  :...</div>
<svg style="position:absolute;left:958px;top:560px;" width="10" height="12" viewBox="0 0 10 12"><rect x="0" y="0" width="4" height="3" fill="#000"/><rect x="1" y="1" width="2" height="1" fill="#4aa04a"/><rect x="0" y="4" width="4" height="3" fill="#000"/><rect x="1" y="5" width="2" height="1" fill="#4aa04a"/><rect x="0" y="8" width="4" height="3" fill="#000"/><rect x="1" y="9" width="2" height="1" fill="#4aa04a"/><rect x="6" y="2" width="3" height="1" fill="#000"/><rect x="6" y="6" width="3" height="1" fill="#000"/><rect x="6" y="10" width="3" height="1" fill="#000"/></svg>
<div class="t " style="left:973px;top:556.00px;font-size:16.2px;line-height:19px;color:#000;white-space:pre">owningOrgNa...</div>
<svg style="position:absolute;left:958px;top:582px;" width="10" height="12" viewBox="0 0 10 12"><rect x="0" y="0" width="4" height="3" fill="#000"/><rect x="1" y="1" width="2" height="1" fill="#4aa04a"/><rect x="0" y="4" width="4" height="3" fill="#000"/><rect x="1" y="5" width="2" height="1" fill="#4aa04a"/><rect x="0" y="8" width="4" height="3" fill="#000"/><rect x="1" y="9" width="2" height="1" fill="#4aa04a"/><rect x="6" y="2" width="3" height="1" fill="#000"/><rect x="6" y="6" width="3" height="1" fill="#000"/><rect x="6" y="10" width="3" height="1" fill="#000"/></svg>
<div class="t " style="left:973px;top:578.00px;font-size:16.2px;line-height:19px;color:#000;white-space:pre">status  :String</div>
<svg style="position:absolute;left:958px;top:604px;" width="10" height="12" viewBox="0 0 10 12"><rect x="0" y="0" width="4" height="3" fill="#000"/><rect x="1" y="1" width="2" height="1" fill="#4aa04a"/><rect x="0" y="4" width="4" height="3" fill="#000"/><rect x="1" y="5" width="2" height="1" fill="#4aa04a"/><rect x="0" y="8" width="4" height="3" fill="#000"/><rect x="1" y="9" width="2" height="1" fill="#4aa04a"/><rect x="6" y="2" width="3" height="1" fill="#000"/><rect x="6" y="6" width="3" height="1" fill="#000"/><rect x="6" y="10" width="3" height="1" fill="#000"/></svg>
<div class="t " style="left:973px;top:600.00px;font-size:16.2px;line-height:19px;color:#000;white-space:pre">remark  :String</div>
<svg style="position:absolute;left:958px;top:626px;" width="10" height="12" viewBox="0 0 10 12"><rect x="0" y="0" width="4" height="3" fill="#000"/><rect x="1" y="1" width="2" height="1" fill="#4aa04a"/><rect x="0" y="4" width="4" height="3" fill="#000"/><rect x="1" y="5" width="2" height="1" fill="#4aa04a"/><rect x="0" y="8" width="4" height="3" fill="#000"/><rect x="1" y="9" width="2" height="1" fill="#4aa04a"/><rect x="6" y="2" width="3" height="1" fill="#000"/><rect x="6" y="6" width="3" height="1" fill="#000"/><rect x="6" y="10" width="3" height="1" fill="#000"/></svg>
<div class="t " style="left:973px;top:622.00px;font-size:16.2px;line-height:19px;color:#000;white-space:pre;letter-spacing:-0.16px">createUser  :Str...</div>
<svg style="position:absolute;left:958px;top:648px;" width="10" height="12" viewBox="0 0 10 12"><rect x="0" y="0" width="4" height="3" fill="#000"/><rect x="1" y="1" width="2" height="1" fill="#4aa04a"/><rect x="0" y="4" width="4" height="3" fill="#000"/><rect x="1" y="5" width="2" height="1" fill="#4aa04a"/><rect x="0" y="8" width="4" height="3" fill="#000"/><rect x="1" y="9" width="2" height="1" fill="#4aa04a"/><rect x="6" y="2" width="3" height="1" fill="#000"/><rect x="6" y="6" width="3" height="1" fill="#000"/><rect x="6" y="10" width="3" height="1" fill="#000"/></svg>
<div class="t " style="left:973px;top:644.00px;font-size:16.2px;line-height:19px;color:#000;white-space:pre;letter-spacing:-0.17px">updateUser  :St...</div>
<svg style="position:absolute;left:958px;top:670px;" width="10" height="12" viewBox="0 0 10 12"><rect x="0" y="0" width="4" height="3" fill="#000"/><rect x="1" y="1" width="2" height="1" fill="#4aa04a"/><rect x="0" y="4" width="4" height="3" fill="#000"/><rect x="1" y="5" width="2" height="1" fill="#4aa04a"/><rect x="0" y="8" width="4" height="3" fill="#000"/><rect x="1" y="9" width="2" height="1" fill="#4aa04a"/><rect x="6" y="2" width="3" height="1" fill="#000"/><rect x="6" y="6" width="3" height="1" fill="#000"/><rect x="6" y="10" width="3" height="1" fill="#000"/></svg>
<div class="t " style="left:973px;top:666.00px;font-size:16.2px;line-height:19px;color:#000;white-space:pre">createTime  :Ti...</div>
<svg style="position:absolute;left:958px;top:692px;" width="10" height="12" viewBox="0 0 10 12"><rect x="0" y="0" width="4" height="3" fill="#000"/><rect x="1" y="1" width="2" height="1" fill="#4aa04a"/><rect x="0" y="4" width="4" height="3" fill="#000"/><rect x="1" y="5" width="2" height="1" fill="#4aa04a"/><rect x="0" y="8" width="4" height="3" fill="#000"/><rect x="1" y="9" width="2" height="1" fill="#4aa04a"/><rect x="6" y="2" width="3" height="1" fill="#000"/><rect x="6" y="6" width="3" height="1" fill="#000"/><rect x="6" y="10" width="3" height="1" fill="#000"/></svg>
<div class="t " style="left:973px;top:688.00px;font-size:16.2px;line-height:19px;color:#000;white-space:pre">updateTime  :T...</div>
<svg style="position:absolute;left:958px;top:714px;" width="10" height="12" viewBox="0 0 10 12"><rect x="0" y="0" width="4" height="3" fill="#000"/><rect x="1" y="1" width="2" height="1" fill="#4aa04a"/><rect x="0" y="4" width="4" height="3" fill="#000"/><rect x="1" y="5" width="2" height="1" fill="#4aa04a"/><rect x="0" y="8" width="4" height="3" fill="#000"/><rect x="1" y="9" width="2" height="1" fill="#4aa04a"/><rect x="6" y="2" width="3" height="1" fill="#000"/><rect x="6" y="6" width="3" height="1" fill="#000"/><rect x="6" y="10" width="3" height="1" fill="#000"/></svg>
<div class="t " style="left:973px;top:710.00px;font-size:16.2px;line-height:19px;color:#000;white-space:pre">tenantId  :String</div>
<div style="position:absolute;left:952px;top:730px;width:148px;height:1px;background:repeating-linear-gradient(90deg,#9a9a9a 0 1px,transparent 1px 3px)"></div>
<div style="position:absolute;left:1161px;top:325px;width:150px;height:336px;background:#fff;border:1px solid #6aaa34;box-sizing:border-box"></div>
<svg style="position:absolute;left:1167px;top:339px;" width="13" height="12" viewBox="0 0 13 12"><rect x="0.5" y="0.5" width="10" height="9" fill="#e8f4d0" stroke="#6ab040"/><rect x="1" y="1" width="9" height="2" fill="#8ac850"/><rect x="1" y="5" width="9" height="1.5" fill="#a8d878"/><path d="M7 4.5 Q9.5 3.5 12.5 4.5 L12.5 11 Q9.5 12.2 7 11 Z" fill="#f0c030" stroke="#c08a10" stroke-width="0.8"/></svg>
<div class="t " style="left:1188px;top:335.00px;font-size:16.2px;line-height:19px;color:#000;">ThemeDirectory</div>
<div style="position:absolute;left:1162px;top:354px;width:148px;height:1px;background:repeating-linear-gradient(90deg,#9a9a9a 0 1px,transparent 1px 3px)"></div>
<svg style="position:absolute;left:1165px;top:360px;" width="16" height="14" viewBox="0 0 16 14"><path d="M0.8 5.2 Q1 3.6 2.6 3.4 L3.6 2.6 L4.8 3.4 L6 2.6 L7.2 3.4 L8.6 3.4 Q9.4 0.6 12 0.6 Q15.4 0.6 15.4 4.2 Q15.4 7.8 12 7.8 Q9.4 7.8 8.6 5.4 L2.4 6.6 Q0.8 6.6 0.8 5.2 Z" fill="#fbe24a" stroke="#c89a1a" stroke-width="0.9"/><circle cx="12" cy="4.2" r="1.2" fill="#6a5020"/><rect x="2" y="10" width="4" height="3" fill="#000"/><rect x="3" y="11" width="2" height="1" fill="#4aa04a"/><rect x="8" y="10" width="4" height="3" fill="#000"/><rect x="9" y="11" width="2" height="1" fill="#4aa04a"/></svg>
<div class="t " style="left:1183px;top:358.00px;font-size:16.2px;line-height:19px;color:#000;white-space:pre">id  :String</div>
<svg style="position:absolute;left:1168px;top:384px;" width="10" height="12" viewBox="0 0 10 12"><rect x="0" y="0" width="4" height="3" fill="#000"/><rect x="1" y="1" width="2" height="1" fill="#4aa04a"/><rect x="0" y="4" width="4" height="3" fill="#000"/><rect x="1" y="5" width="2" height="1" fill="#4aa04a"/><rect x="0" y="8" width="4" height="3" fill="#000"/><rect x="1" y="9" width="2" height="1" fill="#4aa04a"/><rect x="6" y="2" width="3" height="1" fill="#000"/><rect x="6" y="6" width="3" height="1" fill="#000"/><rect x="6" y="10" width="3" height="1" fill="#000"/></svg>
<div class="t " style="left:1183px;top:380.00px;font-size:16.2px;line-height:19px;color:#000;white-space:pre">name  :String</div>
<svg style="position:absolute;left:1168px;top:406px;" width="10" height="12" viewBox="0 0 10 12"><rect x="0" y="0" width="4" height="3" fill="#000"/><rect x="1" y="1" width="2" height="1" fill="#4aa04a"/><rect x="0" y="4" width="4" height="3" fill="#000"/><rect x="1" y="5" width="2" height="1" fill="#4aa04a"/><rect x="0" y="8" width="4" height="3" fill="#000"/><rect x="1" y="9" width="2" height="1" fill="#4aa04a"/><rect x="6" y="2" width="3" height="1" fill="#000"/><rect x="6" y="6" width="3" height="1" fill="#000"/><rect x="6" y="10" width="3" height="1" fill="#000"/></svg>
<div class="t " style="left:1183px;top:402.00px;font-size:16.2px;line-height:19px;color:#000;white-space:pre">code  :String</div>
<svg style="position:absolute;left:1168px;top:428px;" width="10" height="12" viewBox="0 0 10 12"><rect x="0" y="0" width="4" height="3" fill="#000"/><rect x="1" y="1" width="2" height="1" fill="#4aa04a"/><rect x="0" y="4" width="4" height="3" fill="#000"/><rect x="1" y="5" width="2" height="1" fill="#4aa04a"/><rect x="0" y="8" width="4" height="3" fill="#000"/><rect x="1" y="9" width="2" height="1" fill="#4aa04a"/><rect x="6" y="2" width="3" height="1" fill="#000"/><rect x="6" y="6" width="3" height="1" fill="#000"/><rect x="6" y="10" width="3" height="1" fill="#000"/></svg>
<div class="t " style="left:1183px;top:424.00px;font-size:16.2px;line-height:19px;color:#000;white-space:pre">orgId  :String</div>
<svg style="position:absolute;left:1168px;top:450px;" width="10" height="12" viewBox="0 0 10 12"><rect x="0" y="0" width="4" height="3" fill="#000"/><rect x="1" y="1" width="2" height="1" fill="#4aa04a"/><rect x="0" y="4" width="4" height="3" fill="#000"/><rect x="1" y="5" width="2" height="1" fill="#4aa04a"/><rect x="0" y="8" width="4" height="3" fill="#000"/><rect x="1" y="9" width="2" height="1" fill="#4aa04a"/><rect x="6" y="2" width="3" height="1" fill="#000"/><rect x="6" y="6" width="3" height="1" fill="#000"/><rect x="6" y="10" width="3" height="1" fill="#000"/></svg>
<div class="t " style="left:1183px;top:446.00px;font-size:16.2px;line-height:19px;color:#000;white-space:pre">orgName  :String</div>
<svg style="position:absolute;left:1168px;top:472px;" width="10" height="12" viewBox="0 0 10 12"><rect x="0" y="0" width="4" height="3" fill="#000"/><rect x="1" y="1" width="2" height="1" fill="#4aa04a"/><rect x="0" y="4" width="4" height="3" fill="#000"/><rect x="1" y="5" width="2" height="1" fill="#4aa04a"/><rect x="0" y="8" width="4" height="3" fill="#000"/><rect x="1" y="9" width="2" height="1" fill="#4aa04a"/><rect x="6" y="2" width="3" height="1" fill="#000"/><rect x="6" y="6" width="3" height="1" fill="#000"/><rect x="6" y="10" width="3" height="1" fill="#000"/></svg>
<div class="t " style="left:1183px;top:468.00px;font-size:16.2px;line-height:19px;color:#000;white-space:pre">remark  :String</div>
<svg style="position:absolute;left:1168px;top:494px;" width="10" height="12" viewBox="0 0 10 12"><rect x="0" y="0" width="4" height="3" fill="#000"/><rect x="1" y="1" width="2" height="1" fill="#4aa04a"/><rect x="0" y="4" width="4" height="3" fill="#000"/><rect x="1" y="5" width="2" height="1" fill="#4aa04a"/><rect x="0" y="8" width="4" height="3" fill="#000"/><rect x="1" y="9" width="2" height="1" fill="#4aa04a"/><rect x="6" y="2" width="3" height="1" fill="#000"/><rect x="6" y="6" width="3" height="1" fill="#000"/><rect x="6" y="10" width="3" height="1" fill="#000"/></svg>
<div class="t " style="left:1183px;top:490.00px;font-size:16.2px;line-height:19px;color:#000;white-space:pre">isLeaf  :String</div>
<svg style="position:absolute;left:1168px;top:516px;" width="10" height="12" viewBox="0 0 10 12"><rect x="0" y="0" width="4" height="3" fill="#000"/><rect x="1" y="1" width="2" height="1" fill="#4aa04a"/><rect x="0" y="4" width="4" height="3" fill="#000"/><rect x="1" y="5" width="2" height="1" fill="#4aa04a"/><rect x="0" y="8" width="4" height="3" fill="#000"/><rect x="1" y="9" width="2" height="1" fill="#4aa04a"/><rect x="6" y="2" width="3" height="1" fill="#000"/><rect x="6" y="6" width="3" height="1" fill="#000"/><rect x="6" y="10" width="3" height="1" fill="#000"/></svg>
<div class="t " style="left:1183px;top:512.00px;font-size:16.2px;line-height:19px;color:#000;white-space:pre">parentId  :String</div>
<svg style="position:absolute;left:1168px;top:538px;" width="10" height="12" viewBox="0 0 10 12"><rect x="0" y="0" width="4" height="3" fill="#000"/><rect x="1" y="1" width="2" height="1" fill="#4aa04a"/><rect x="0" y="4" width="4" height="3" fill="#000"/><rect x="1" y="5" width="2" height="1" fill="#4aa04a"/><rect x="0" y="8" width="4" height="3" fill="#000"/><rect x="1" y="9" width="2" height="1" fill="#4aa04a"/><rect x="6" y="2" width="3" height="1" fill="#000"/><rect x="6" y="6" width="3" height="1" fill="#000"/><rect x="6" y="10" width="3" height="1" fill="#000"/></svg>
<div class="t " style="left:1183px;top:534.00px;font-size:16.2px;line-height:19px;color:#000;white-space:pre;letter-spacing:-0.16px">createUser  :Str...</div>
<svg style="position:absolute;left:1168px;top:560px;" width="10" height="12" viewBox="0 0 10 12"><rect x="0" y="0" width="4" height="3" fill="#000"/><rect x="1" y="1" width="2" height="1" fill="#4aa04a"/><rect x="0" y="4" width="4" height="3" fill="#000"/><rect x="1" y="5" width="2" height="1" fill="#4aa04a"/><rect x="0" y="8" width="4" height="3" fill="#000"/><rect x="1" y="9" width="2" height="1" fill="#4aa04a"/><rect x="6" y="2" width="3" height="1" fill="#000"/><rect x="6" y="6" width="3" height="1" fill="#000"/><rect x="6" y="10" width="3" height="1" fill="#000"/></svg>
<div class="t " style="left:1183px;top:556.00px;font-size:16.2px;line-height:19px;color:#000;white-space:pre;letter-spacing:-0.17px">updateUser  :St...</div>
<svg style="position:absolute;left:1168px;top:582px;" width="10" height="12" viewBox="0 0 10 12"><rect x="0" y="0" width="4" height="3" fill="#000"/><rect x="1" y="1" width="2" height="1" fill="#4aa04a"/><rect x="0" y="4" width="4" height="3" fill="#000"/><rect x="1" y="5" width="2" height="1" fill="#4aa04a"/><rect x="0" y="8" width="4" height="3" fill="#000"/><rect x="1" y="9" width="2" height="1" fill="#4aa04a"/><rect x="6" y="2" width="3" height="1" fill="#000"/><rect x="6" y="6" width="3" height="1" fill="#000"/><rect x="6" y="10" width="3" height="1" fill="#000"/></svg>
<div class="t " style="left:1183px;top:578.00px;font-size:16.2px;line-height:19px;color:#000;white-space:pre">createTime  :Ti...</div>
<svg style="position:absolute;left:1168px;top:604px;" width="10" height="12" viewBox="0 0 10 12"><rect x="0" y="0" width="4" height="3" fill="#000"/><rect x="1" y="1" width="2" height="1" fill="#4aa04a"/><rect x="0" y="4" width="4" height="3" fill="#000"/><rect x="1" y="5" width="2" height="1" fill="#4aa04a"/><rect x="0" y="8" width="4" height="3" fill="#000"/><rect x="1" y="9" width="2" height="1" fill="#4aa04a"/><rect x="6" y="2" width="3" height="1" fill="#000"/><rect x="6" y="6" width="3" height="1" fill="#000"/><rect x="6" y="10" width="3" height="1" fill="#000"/></svg>
<div class="t " style="left:1183px;top:600.00px;font-size:16.2px;line-height:19px;color:#000;white-space:pre">updateTime  :T...</div>
<svg style="position:absolute;left:1168px;top:626px;" width="10" height="12" viewBox="0 0 10 12"><rect x="0" y="0" width="4" height="3" fill="#000"/><rect x="1" y="1" width="2" height="1" fill="#4aa04a"/><rect x="0" y="4" width="4" height="3" fill="#000"/><rect x="1" y="5" width="2" height="1" fill="#4aa04a"/><rect x="0" y="8" width="4" height="3" fill="#000"/><rect x="1" y="9" width="2" height="1" fill="#4aa04a"/><rect x="6" y="2" width="3" height="1" fill="#000"/><rect x="6" y="6" width="3" height="1" fill="#000"/><rect x="6" y="10" width="3" height="1" fill="#000"/></svg>
<div class="t " style="left:1183px;top:622.00px;font-size:16.2px;line-height:19px;color:#000;white-space:pre">tenantId  :String</div>
<div style="position:absolute;left:1162px;top:642px;width:148px;height:1px;background:repeating-linear-gradient(90deg,#9a9a9a 0 1px,transparent 1px 3px)"></div>
<div style="position:absolute;left:1584px;top:63px;width:300px;height:850px;background:#fff;border:1px solid #fff;border-radius:7px 0 0 7px;box-sizing:border-box;border-right:none"></div>
<div style="position:absolute;left:1585px;top:64px;width:299px;height:28px;background:#f1f3f9;border-radius:6px 0 0 0"></div>
<div style="position:absolute;left:1585px;top:64px;width:92px;height:29px;background:linear-gradient(#dae1eb,#fdfdfe);border-radius:6px 8px 0 0"></div>
<div class="t " style="left:1609px;top:71.00px;font-size:15px;line-height:18px;color:#000;"><span class="c">构件</span>...</div>
<svg style="position:absolute;left:1660px;top:74px;" width="11" height="11" viewBox="0 0 11 11"><path d="M0.5 0.5 L3.5 0.5 L5.5 2.5 L7.5 0.5 L10.5 0.5 L10.5 3.5 L8.5 5.5 L10.5 7.5 L10.5 10.5 L7.5 10.5 L5.5 8.5 L3.5 10.5 L0.5 10.5 L0.5 7.5 L2.5 5.5 L0.5 3.5 Z" fill="#fff" stroke="#505050" stroke-width="1"/></svg>
<div class="t " style="left:1702px;top:71.00px;font-size:15px;line-height:18px;color:#8a8a8a;"><span class="c">业务</span>...</div>
<div class="t " style="left:1774px;top:71.00px;font-size:15px;line-height:18px;color:#8a8a8a;"><span class="c">组织</span>...</div>
<svg style="position:absolute;left:1837px;top:71px;" width="10" height="4" viewBox="0 0 10 4"><rect x="0.5" y="0.5" width="9" height="3" fill="#fff" stroke="#606060"/></svg>
<svg style="position:absolute;left:1860px;top:71px;" width="10" height="10" viewBox="0 0 10 10"><rect x="0.5" y="0.5" width="9" height="9" fill="#fff" stroke="#606060"/><path d="M0.5 2.5 L9.5 2.5" stroke="#606060"/></svg>
<div style="position:absolute;left:1592px;top:122px;width:239px;height:26px;background:#fff;border:1px solid #7a7a7a;box-sizing:border-box"></div>
<div style="position:absolute;left:1837px;top:123px;width:41px;height:28px;background:#e1e1e1;border:1px solid #adadad;box-sizing:border-box"></div>
<div class="t " style="left:1842px;top:129.00px;font-size:15px;line-height:18px;color:#000;"><span class="c">搜索</span></div>
<div style="position:absolute;left:1592px;top:157px;width:286px;height:760px;background:#fff;border:1px solid #a9a9a9;box-sizing:border-box"></div>
<svg style="position:absolute;left:1603px;top:166px;" width="7" height="11" viewBox="0 0 7 11"><path d="M1.5 1.5 L5.5 5.5 L1.5 9.5" fill="none" stroke="#a0a0a0" stroke-width="1.4"/></svg>
<div class="t " style="left:1638px;top:161.00px;font-size:17px;line-height:20px;color:#000;">com.primeton.eos.foundation</div>
<svg style="position:absolute;left:1616px;top:161px;" width="17" height="17" viewBox="0 0 17 17"><path d="M1.5 2.5 L3 1 L7 1 L8 2.5 L14.5 2.5 L15.5 3.5 L15.5 12.5 L2.5 12.5 L1.5 11.5 Z" fill="#fbe2a0" stroke="#d08a28"/><rect x="7.5" y="4.5" width="4" height="4" fill="#e8b030" stroke="#5a3828"/><rect x="4.5" y="12.5" width="4" height="4" fill="#78c0d8" stroke="#1a2aa0"/><rect x="10" y="9" width="6" height="8" fill="#fff"/><path d="M10.8 10.6 Q11 9.5 12.7 9.5 Q14.5 9.5 14.5 11.1 Q14.5 12.1 13.1 12.8 L12.9 13.8" fill="none" stroke="#1a1a9a" stroke-width="1.6"/><rect x="12.1" y="14.8" width="1.7" height="1.5" fill="#1a1a9a"/></svg>
<svg style="position:absolute;left:1590px;top:71px;" width="17" height="17" viewBox="0 0 17 17"><path d="M3 13 L3 6 Q3 2 7.5 2 Q12 2 12 6 L12 9" fill="none" stroke="#9ab8d8" stroke-width="1.2"/><rect x="3" y="0.5" width="9" height="3" rx="1.5" fill="#f8e8a0" stroke="#c8a030"/><rect x="0.5" y="11" width="9" height="2.5" fill="#30a050"/><rect x="0.5" y="13.5" width="9" height="3" fill="#e06a30"/><path d="M9.5 8.5 L13 8.5 L15.5 11 L15.5 16.5 L9.5 16.5 Z" fill="#fff" stroke="#a08a50"/><path d="M11 12 L14 12 M11 14 L14 14" stroke="#3a6ab0"/></svg>
<svg style="position:absolute;left:1683px;top:71px;" width="17" height="17" viewBox="0 0 17 17"><circle cx="3" cy="3" r="2.5" fill="#a8d8a8" stroke="#70b070"/><rect x="5.5" y="6.5" width="10" height="7" fill="#e8f0f8" stroke="#a0b0c8"/><rect x="8" y="8.5" width="5" height="3" fill="#a8c0e0"/><path d="M10.5 13.5 L10.5 16 M7 16 L14 16" stroke="#a0b0c8"/></svg>
<svg style="position:absolute;left:1755px;top:71px;" width="17" height="17" viewBox="0 0 17 17"><circle cx="8" cy="8" r="7.5" fill="#d8e8b8"/><path d="M2 5 Q8 0 14 5" stroke="#f0a040" stroke-width="2" fill="none"/><path d="M2 11 Q8 16 14 11" stroke="#70b070" stroke-width="2" fill="none"/><circle cx="9" cy="7" r="2.5" fill="#707070"/><path d="M5 15 Q9 8 13 15 Z" fill="#606060"/></svg>
<svg style="position:absolute;left:1778px;top:98px;" width="16" height="16" viewBox="0 0 16 16"><path d="M3.5 4 L3.5 1.5 L7 1.5 L8 3 L15.5 3 L15.5 12 L3.5 12 Z" fill="#f8d890" stroke="#c8902a"/><rect x="1.5" y="6" width="6" height="9" fill="#4a8ad8" stroke="#1a4aa0"/><path d="M0 8 L1.5 8 M0 10.5 L1.5 10.5 M0 13 L1.5 13 M7.5 8 L9 8 M7.5 10.5 L9 10.5 M7.5 13 L9 13" stroke="#1a4aa0"/></svg>
<div style="position:absolute;left:1799px;top:95px;width:23px;height:22px;background:#cde6f9;border:1px solid #99c9ef;box-sizing:border-box"></div>
<svg style="position:absolute;left:1802px;top:98px;" width="17" height="17" viewBox="0 0 17 17"><path d="M0.5 4 L0.5 1.5 L4 1.5 L5 3 L14.5 3 L14.5 13 L0.5 13 Z" fill="#f8d890" stroke="#c8902a"/><circle cx="12" cy="12" r="4" fill="#f0a020" stroke="#4a8ad8" stroke-width="1.2"/></svg>
<div style="position:absolute;left:1823px;top:97px;width:1px;height:18px;background:#808080"></div>
<svg style="position:absolute;left:1834px;top:100px;" width="14" height="14" viewBox="0 0 14 14"><rect x="0.5" y="0.5" width="10" height="10" fill="#e4eefa" stroke="#a0acc8"/><rect x="3.5" y="3.5" width="10" height="10" fill="#f0f6fc" stroke="#8894b4"/><path d="M5 9 L12 9" stroke="#1f3f8a" stroke-width="1.5"/></svg>
<svg style="position:absolute;left:1863px;top:100px;" width="12" height="7" viewBox="0 0 12 7"><path d="M0.5 0.5 L11.5 0.5 L6 6 Z" fill="#fff" stroke="#555" stroke-width="1"/></svg>
</body></html>
